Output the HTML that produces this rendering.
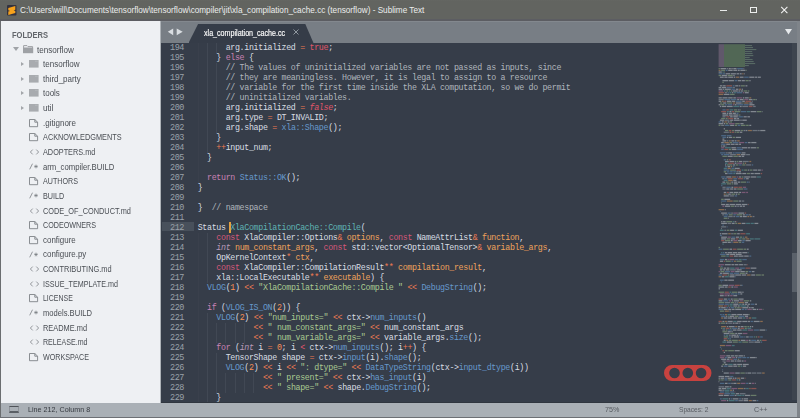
<!DOCTYPE html>
<html><head><meta charset="utf-8">
<style>
*{margin:0;padding:0;box-sizing:border-box}
html,body{width:800px;height:418px;overflow:hidden;background:#6b6e70}
body{position:relative;font-family:"Liberation Sans",sans-serif}
#title{position:absolute;left:0;top:0;width:800px;height:20.5px;background:linear-gradient(#656763 0,#626460 1px,#626460 18.5px,#5c5d62 19.5px);color:#eceeed;font-size:8.2px}
#title .t{position:absolute;left:20px;top:5.5px;white-space:pre}
#logo{position:absolute;left:6px;top:5px;width:10px;height:10px;background:#3b3a36;border-radius:1px}
#logo span{position:absolute;left:1.5px;top:1px;width:7px;height:8px;background:#f29a1f;clip-path:polygon(100% 0,100% 30%,35% 50%,100% 62%,100% 100%,0 100%,0 70%,62% 50%,0 38%,0 0)}
.wb{position:absolute;border-color:#e9ebea}
#side{position:absolute;left:1px;top:20.5px;width:159px;height:382px;background:#eef0f3;color:#4a4e54;overflow:hidden}
#side .h{position:absolute;left:10.6px;top:9px;font-weight:bold;font-size:9px;color:#62666b;transform:scaleX(0.84);transform-origin:0 0}
.row{position:absolute;left:0;height:14px;font-size:9.1px;white-space:pre;line-height:14px}
.row .tx{position:absolute;top:0;transform-origin:0 50%}
.tri{position:absolute;width:0;height:0;border-style:solid}
.fold{position:absolute;width:9.5px;height:7.5px;background:#a7aaae;border-radius:0.5px}
.file{position:absolute;left:28.5px;width:9px;height:8px;border:1px solid #6b6f74;border-radius:0.5px}
.file:after{content:"";position:absolute;right:-1px;top:-1px;width:3px;height:3px;background:#eef0f3;border-left:1px solid #6b6f74;border-bottom:1px solid #6b6f74}
.ic{position:absolute;left:28.5px;font-size:7.5px;color:#55595e;letter-spacing:0.6px}
#sidestrip{position:absolute;left:160px;top:20.5px;width:1.2px;height:382px;background:#aeb3b8}
#tabbar{position:absolute;left:161.2px;top:20.5px;width:637px;height:22.5px;background:#787e85;border-top:1.5px solid #83888e}
#tab{position:absolute;left:188.5px;top:24px;width:125px;height:19px;background:#353c48;clip-path:polygon(9.6px 0,116.8px 0,100% 100%,0 100%)}
#tab .tx{position:absolute;left:15.4px;top:3.6px;font-size:8.4px;color:#ffffff;white-space:pre;transform:scaleX(0.85);transform-origin:0 0;-webkit-text-stroke:0.15px #fff}
#tab .x{position:absolute;left:104px;top:5px;width:6px;height:6px}
#editor{position:absolute;left:161.2px;top:43px;width:636.8px;height:359.5px;background:#363d49;overflow:hidden;border-bottom:1.5px solid #30363f}
#status{position:absolute;left:1px;top:402.5px;width:797px;height:14.2px;background:#aab0b6;color:#363a40;font-size:7.8px}
#status .tx{position:absolute;top:2.6px;white-space:pre;transform:scaleX(0.92);transform-origin:0 0}
#code{position:absolute;left:35.7px;top:-0.3px;font-family:"Liberation Mono",monospace;font-size:8.3px;letter-spacing:-0.32px;line-height:10px;white-space:pre;color:#d9dee4}
#gutter{position:absolute;left:0;top:-0.4px;width:22px;font-family:"Liberation Mono",monospace;font-size:8.5px;letter-spacing:-0.44px;line-height:10px;white-space:pre;color:#9aa1a9;text-align:right}
#curline{position:absolute;left:0;top:178.5px;width:32.5px;height:9.5px;background:#48505b}
#guides b{position:absolute;width:1px;background:#414854}
#code i{font-style:normal}
i.cm{color:#b0b6bd}
i.kw{color:#c982b5}
i.cn{color:#d5587a}
i.in{color:#b99ab9;font-style:italic!important}
i.tr{color:#e0566a}
i.fa{color:#e0566a;font-style:italic!important}
i.op{color:#ee7b52}
i.lt{color:#e2566e}
i.bl{color:#6699cc}
i.cy{color:#5fb3b3}
i.pa{color:#f0a35c}
i.nu{color:#f99157}
i.st{color:#a9c991}
#cursor{position:absolute;left:67px;top:179.3px;width:1.9px;height:10.8px;background:#e3a040}
#mini{position:absolute;left:0;top:0;width:636px;height:359px}
#scroll{position:absolute;left:630px;top:0;width:5.2px;height:357px;background:#3e454f}
#thumb{position:absolute;left:630px;top:210px;width:5.2px;height:39px;background:#5a616a}
#frameR{position:absolute;left:797.2px;top:20.5px;width:2.8px;height:397px;background:#7f848a}
#frameB{position:absolute;left:0;top:416.7px;width:800px;height:1.3px;background:#6d7075}
</style></head><body>
<div id="title"><svg style="position:absolute;left:6.5px;top:4.6px" width="10" height="11" viewBox="0 0 10 11"><rect x="0" y="0" width="9.5" height="10.4" rx="1" fill="#33323f"/><path d="M1.3 2.9 L8.3 1.1 V4.7 L6.6 5.3 L8.3 5.9 V8.1 L1.3 9.9 V6.5 L3.1 5.9 L1.3 5.2Z" fill="#f7a21c"/></svg><div class="t">C:\Users\will\Documents\tensorflow\tensorflow\compiler\jit\xla_compilation_cache.cc (tensorflow) - Sublime Text</div>
<div style="position:absolute;left:720px;top:10px;width:7px;height:1px;background:#e9ebea"></div>
<div style="position:absolute;left:750px;top:6.8px;width:7.2px;height:6.4px;border:1px solid #eceeed"></div>
<svg style="position:absolute;left:780px;top:6px" width="9" height="8" viewBox="0 0 9 8"><path d="M1.2 0.9 L7.4 7.1 M7.4 0.9 L1.2 7.1" stroke="#f2f3f2" stroke-width="1.05"/></svg>
</div>
<div id="side">
<div class="h">FOLDERS</div>
<div class="tri" style="left:11.8px;top:26.90px;border-width:4px 3.2px 0 3.2px;border-color:#a0a3a7 transparent transparent transparent"></div><svg style="position:absolute;left:21.5px;top:24.90px" width="11" height="9" viewBox="0 0 11 9"><path d="M0.6 0.6 H4 L5 1.6 H9.6 V3 H0.6Z" fill="none" stroke="#9ea1a5" stroke-width="1"/><path d="M0 3 H10.2 V8.2 H0Z" fill="#9ea1a5"/></svg><div class="row" style="top:22.10px"><span class="tx" style="left:35.8px;transform:scaleX(0.890)">tensorflow</span></div><div class="tri" style="left:20.3px;top:41.43px;border-width:2.3px 0 2.3px 3.2px;border-color:transparent transparent transparent #a3a6aa"></div><svg style="position:absolute;left:27.9px;top:39.73px" width="10" height="8" viewBox="0 0 10 8"><path d="M0 0 H9.6 V7.6 H0Z" fill="#a8abaf"/><path d="M6 0.8 H8.8 V1.6 H6Z" fill="#b9bcbf"/></svg><div class="row" style="top:36.73px"><span class="tx" style="left:42.4px;transform:scaleX(0.883)">tensorflow</span></div><div class="tri" style="left:20.3px;top:56.06px;border-width:2.3px 0 2.3px 3.2px;border-color:transparent transparent transparent #a3a6aa"></div><svg style="position:absolute;left:27.9px;top:54.36px" width="10" height="8" viewBox="0 0 10 8"><path d="M0 0 H9.6 V7.6 H0Z" fill="#a8abaf"/><path d="M6 0.8 H8.8 V1.6 H6Z" fill="#b9bcbf"/></svg><div class="row" style="top:51.36px"><span class="tx" style="left:42.4px;transform:scaleX(0.880)">third_party</span></div><div class="tri" style="left:20.3px;top:70.69px;border-width:2.3px 0 2.3px 3.2px;border-color:transparent transparent transparent #a3a6aa"></div><svg style="position:absolute;left:27.9px;top:68.99px" width="10" height="8" viewBox="0 0 10 8"><path d="M0 0 H9.6 V7.6 H0Z" fill="#a8abaf"/><path d="M6 0.8 H8.8 V1.6 H6Z" fill="#b9bcbf"/></svg><div class="row" style="top:65.99px"><span class="tx" style="left:42.4px;transform:scaleX(0.878)">tools</span></div><div class="tri" style="left:20.3px;top:85.32px;border-width:2.3px 0 2.3px 3.2px;border-color:transparent transparent transparent #a3a6aa"></div><svg style="position:absolute;left:27.9px;top:83.62px" width="10" height="8" viewBox="0 0 10 8"><path d="M0 0 H9.6 V7.6 H0Z" fill="#a8abaf"/><path d="M6 0.8 H8.8 V1.6 H6Z" fill="#b9bcbf"/></svg><div class="row" style="top:80.62px"><span class="tx" style="left:42.4px;transform:scaleX(0.890)">util</span></div><svg style="position:absolute;left:27.9px;top:98.15px" width="10" height="9" viewBox="0 0 10 9"><path d="M0.5 0.5 H5.8 L8.6 3.2 V7.7 H0.5Z M5.8 0.5 V3.2 H8.6" fill="none" stroke="#7e8287" stroke-width="0.9"/></svg><div class="row" style="top:95.25px"><span class="tx" style="left:42.4px;transform:scaleX(0.882)">.gitignore</span></div><svg style="position:absolute;left:27.9px;top:112.78px" width="10" height="9" viewBox="0 0 10 9"><path d="M0.5 0.5 H5.8 L8.6 3.2 V7.7 H0.5Z M5.8 0.5 V3.2 H8.6" fill="none" stroke="#7e8287" stroke-width="0.9"/></svg><div class="row" style="top:109.88px"><span class="tx" style="left:42.4px;transform:scaleX(0.806)">ACKNOWLEDGMENTS</span></div><svg style="position:absolute;left:28.8px;top:128.51px" width="9" height="6" viewBox="0 0 9 6"><path d="M2.7 0.6 L0.4 3 L2.7 5.4 M6.3 0.6 L8.6 3 L6.3 5.4" fill="none" stroke="#74787d" stroke-width="0.75"/></svg><div class="row" style="top:124.51px"><span class="tx" style="left:42.4px;transform:scaleX(0.802)">ADOPTERS.md</span></div><svg style="position:absolute;left:28.1px;top:142.64px" width="10" height="7" viewBox="0 0 10 7"><path d="M0.7 6.3 L3.5 0.7" fill="none" stroke="#74787d" stroke-width="0.75"/><path d="M7 1.6 V5.4 M5.2 3.5 H8.8 M5.8 2.3 L8.2 4.7 M8.2 2.3 L5.8 4.7" fill="none" stroke="#74787d" stroke-width="0.65"/></svg><div class="row" style="top:139.14px"><span class="tx" style="left:42.4px;transform:scaleX(0.850)">arm_compiler.BUILD</span></div><svg style="position:absolute;left:27.9px;top:156.67px" width="10" height="9" viewBox="0 0 10 9"><path d="M0.5 0.5 H5.8 L8.6 3.2 V7.7 H0.5Z M5.8 0.5 V3.2 H8.6" fill="none" stroke="#7e8287" stroke-width="0.9"/></svg><div class="row" style="top:153.77px"><span class="tx" style="left:42.4px;transform:scaleX(0.786)">AUTHORS</span></div><svg style="position:absolute;left:28.1px;top:171.90px" width="10" height="7" viewBox="0 0 10 7"><path d="M0.7 6.3 L3.5 0.7" fill="none" stroke="#74787d" stroke-width="0.75"/><path d="M7 1.6 V5.4 M5.2 3.5 H8.8 M5.8 2.3 L8.2 4.7 M8.2 2.3 L5.8 4.7" fill="none" stroke="#74787d" stroke-width="0.65"/></svg><div class="row" style="top:168.40px"><span class="tx" style="left:42.4px;transform:scaleX(0.794)">BUILD</span></div><svg style="position:absolute;left:28.8px;top:187.03px" width="9" height="6" viewBox="0 0 9 6"><path d="M2.7 0.6 L0.4 3 L2.7 5.4 M6.3 0.6 L8.6 3 L6.3 5.4" fill="none" stroke="#74787d" stroke-width="0.75"/></svg><div class="row" style="top:183.03px"><span class="tx" style="left:42.4px;transform:scaleX(0.809)">CODE_OF_CONDUCT.md</span></div><svg style="position:absolute;left:27.9px;top:200.56px" width="10" height="9" viewBox="0 0 10 9"><path d="M0.5 0.5 H5.8 L8.6 3.2 V7.7 H0.5Z M5.8 0.5 V3.2 H8.6" fill="none" stroke="#7e8287" stroke-width="0.9"/></svg><div class="row" style="top:197.66px"><span class="tx" style="left:42.4px;transform:scaleX(0.789)">CODEOWNERS</span></div><svg style="position:absolute;left:27.9px;top:215.19px" width="10" height="9" viewBox="0 0 10 9"><path d="M0.5 0.5 H5.8 L8.6 3.2 V7.7 H0.5Z M5.8 0.5 V3.2 H8.6" fill="none" stroke="#7e8287" stroke-width="0.9"/></svg><div class="row" style="top:212.29px"><span class="tx" style="left:42.4px;transform:scaleX(0.874)">configure</span></div><svg style="position:absolute;left:28.1px;top:230.42px" width="10" height="7" viewBox="0 0 10 7"><path d="M0.7 6.3 L3.5 0.7" fill="none" stroke="#74787d" stroke-width="0.75"/><path d="M7 1.6 V5.4 M5.2 3.5 H8.8 M5.8 2.3 L8.2 4.7 M8.2 2.3 L5.8 4.7" fill="none" stroke="#74787d" stroke-width="0.65"/></svg><div class="row" style="top:226.92px"><span class="tx" style="left:42.4px;transform:scaleX(0.874)">configure.py</span></div><svg style="position:absolute;left:28.8px;top:245.55px" width="9" height="6" viewBox="0 0 9 6"><path d="M2.7 0.6 L0.4 3 L2.7 5.4 M6.3 0.6 L8.6 3 L6.3 5.4" fill="none" stroke="#74787d" stroke-width="0.75"/></svg><div class="row" style="top:241.55px"><span class="tx" style="left:42.4px;transform:scaleX(0.813)">CONTRIBUTING.md</span></div><svg style="position:absolute;left:28.8px;top:260.18px" width="9" height="6" viewBox="0 0 9 6"><path d="M2.7 0.6 L0.4 3 L2.7 5.4 M6.3 0.6 L8.6 3 L6.3 5.4" fill="none" stroke="#74787d" stroke-width="0.75"/></svg><div class="row" style="top:256.18px"><span class="tx" style="left:42.4px;transform:scaleX(0.790)">ISSUE_TEMPLATE.md</span></div><svg style="position:absolute;left:27.9px;top:273.71px" width="10" height="9" viewBox="0 0 10 9"><path d="M0.5 0.5 H5.8 L8.6 3.2 V7.7 H0.5Z M5.8 0.5 V3.2 H8.6" fill="none" stroke="#7e8287" stroke-width="0.9"/></svg><div class="row" style="top:270.81px"><span class="tx" style="left:42.4px;transform:scaleX(0.765)">LICENSE</span></div><svg style="position:absolute;left:28.1px;top:288.94px" width="10" height="7" viewBox="0 0 10 7"><path d="M0.7 6.3 L3.5 0.7" fill="none" stroke="#74787d" stroke-width="0.75"/><path d="M7 1.6 V5.4 M5.2 3.5 H8.8 M5.8 2.3 L8.2 4.7 M8.2 2.3 L5.8 4.7" fill="none" stroke="#74787d" stroke-width="0.65"/></svg><div class="row" style="top:285.44px"><span class="tx" style="left:42.4px;transform:scaleX(0.836)">models.BUILD</span></div><svg style="position:absolute;left:28.8px;top:304.07px" width="9" height="6" viewBox="0 0 9 6"><path d="M2.7 0.6 L0.4 3 L2.7 5.4 M6.3 0.6 L8.6 3 L6.3 5.4" fill="none" stroke="#74787d" stroke-width="0.75"/></svg><div class="row" style="top:300.07px"><span class="tx" style="left:42.4px;transform:scaleX(0.814)">README.md</span></div><svg style="position:absolute;left:28.8px;top:318.70px" width="9" height="6" viewBox="0 0 9 6"><path d="M2.7 0.6 L0.4 3 L2.7 5.4 M6.3 0.6 L8.6 3 L6.3 5.4" fill="none" stroke="#74787d" stroke-width="0.75"/></svg><div class="row" style="top:314.70px"><span class="tx" style="left:42.4px;transform:scaleX(0.779)">RELEASE.md</span></div><svg style="position:absolute;left:27.9px;top:332.23px" width="10" height="9" viewBox="0 0 10 9"><path d="M0.5 0.5 H5.8 L8.6 3.2 V7.7 H0.5Z M5.8 0.5 V3.2 H8.6" fill="none" stroke="#7e8287" stroke-width="0.9"/></svg><div class="row" style="top:329.33px"><span class="tx" style="left:42.4px;transform:scaleX(0.787)">WORKSPACE</span></div>
</div>
<div id="sidestrip"></div>
<div id="tabbar"></div>
<svg style="position:absolute;left:160px;top:20px" width="30" height="20" viewBox="0 0 30 20"><path d="M7.8 11.8 L13.2 8.4 L13.2 15.2Z M22.7 11.8 L16.7 8.4 L16.7 15.2Z" fill="#d9dde1"/></svg>
<div id="tab"><div class="tx">xla_compilation_cache.cc</div>
<svg class="x" viewBox="0 0 6 6" style="width:6px;height:6px"><path d="M0.5 0.5 L5.5 5.5 M5.5 0.5 L0.5 5.5" stroke="#9aa1a9" stroke-width="0.9"/></svg></div>
<svg style="position:absolute;left:784.5px;top:29px" width="7" height="6" viewBox="0 0 7 6"><path d="M0 0 L7 0 L3.5 5.5Z" fill="#e6e9ec"/></svg>
<div id="editor"><div style="position:absolute;left:0.8px;top:0;width:636px;height:358px">
<div id="curline"></div>
<div id="gutter">194
195
196
197
198
199
200
201
202
203
204
205
206
207
208
209
210
211
212
213
214
215
216
217
218
219
220
221
222
223
224
225
226
227
228
229</div>
<div id="guides"><b style="left:35.60px;top:0px;height:140px;opacity:.35"></b><b style="left:35.60px;top:190px;height:170px;opacity:.35"></b><b style="left:44.90px;top:0px;height:110px"></b><b style="left:44.90px;top:190px;height:50px"></b><b style="left:44.90px;top:270px;height:90px"></b><b style="left:54.20px;top:0px;height:10px"></b><b style="left:54.20px;top:20px;height:70px"></b><b style="left:54.20px;top:280px;height:20px"></b><b style="left:54.20px;top:310px;height:40px"></b><b style="left:63.50px;top:280px;height:20px"></b><b style="left:63.50px;top:330px;height:20px"></b><b style="left:72.80px;top:280px;height:20px"></b><b style="left:72.80px;top:330px;height:20px"></b><b style="left:82.10px;top:280px;height:20px"></b><b style="left:82.10px;top:330px;height:20px"></b><b style="left:91.40px;top:330px;height:20px"></b></div>
<div id="code">      arg.initialized <i class="op">=</i> <i class="tr">true</i>;
    } <i class="kw">else</i> {
      <i class="cm">// The values of uninitialized variables are not passed as inputs, since</i>
      <i class="cm">// they are meaningless. However, it is legal to assign to a resource</i>
      <i class="cm">// variable for the first time inside the XLA computation, so we do permit</i>
      <i class="cm">// uninitialized variables.</i>
      arg.initialized <i class="op">=</i> <i class="fa">false</i>;
      arg.type <i class="op">=</i> DT_INVALID;
      arg.shape <i class="op">=</i> <i class="bl">xla::Shape</i>();
    }
    <i class="op">++</i>input_num;
  }

  <i class="kw">return</i> <i class="bl">Status::OK</i>();
}

}  <i class="cm">// namespace</i>

Status <i class="cy">XlaCompilationCache::Compile</i>(
    <i class="cn">const</i> XlaCompiler::Options<i class="op">&amp;</i> <i class="pa">options</i>, <i class="cn">const</i> NameAttrList<i class="op">&amp;</i> <i class="pa">function</i>,
    <i class="in">int</i> <i class="pa">num_constant_args</i>, <i class="cn">const</i> std::vector&lt;OptionalTensor&gt;<i class="op">&amp;</i> <i class="pa">variable_args</i>,
    OpKernelContext<i class="op">*</i> <i class="pa">ctx</i>,
    <i class="cn">const</i> XlaCompiler::CompilationResult<i class="op">**</i> <i class="pa">compilation_result</i>,
    xla::LocalExecutable<i class="op">**</i> <i class="pa">executable</i>) {
  <i class="bl">VLOG</i>(<i class="nu">1</i>) <i class="op">&lt;&lt;</i> <i class="st">"XlaCompilationCache::Compile "</i> <i class="op">&lt;&lt;</i> <i class="bl">DebugString</i>();

  <i class="kw">if</i> (<i class="bl">VLOG_IS_ON</i>(<i class="nu">2</i>)) {
    <i class="bl">VLOG</i>(<i class="nu">2</i>) <i class="op">&lt;&lt;</i> <i class="st">"num_inputs="</i> <i class="op">&lt;&lt;</i> ctx-&gt;<i class="bl">num_inputs</i>()
            <i class="op">&lt;&lt;</i> <i class="st">" num_constant_args="</i> <i class="op">&lt;&lt;</i> num_constant_args
            <i class="op">&lt;&lt;</i> <i class="st">" num_variable_args="</i> <i class="op">&lt;&lt;</i> variable_args.<i class="bl">size</i>();
    <i class="kw">for</i> (<i class="in">int</i> i <i class="op">=</i> <i class="nu">0</i>; i <i class="lt">&lt;</i> ctx-&gt;<i class="bl">num_inputs</i>(); i<i class="op">++</i>) {
      TensorShape shape <i class="op">=</i> ctx-&gt;<i class="bl">input</i>(i).<i class="bl">shape</i>();
      <i class="bl">VLOG</i>(<i class="nu">2</i>) <i class="op">&lt;&lt;</i> i <i class="op">&lt;&lt;</i> <i class="st">": dtype="</i> <i class="op">&lt;&lt;</i> <i class="bl">DataTypeString</i>(ctx-&gt;<i class="bl">input_dtype</i>(i))
              <i class="op">&lt;&lt;</i> <i class="st">" present="</i> <i class="op">&lt;&lt;</i> ctx-&gt;<i class="bl">has_input</i>(i)
              <i class="op">&lt;&lt;</i> <i class="st">" shape="</i> <i class="op">&lt;&lt;</i> shape.<i class="bl">DebugString</i>();
    }</div>
<div id="cursor"></div>
<div id="mini"><svg style="position:absolute;left:0;top:0" width="636" height="359"><defs><filter id="mb" x="-5%" y="-5%" width="110%" height="110%"><feGaussianBlur stdDeviation="0.6 0.45"/></filter></defs><g filter="url(#mb)"><rect x="556.60" y="1.20" width="5.40" height="22.80" fill="#6a5f73" fill-opacity="0.8"/><rect x="562.00" y="1.20" width="21.00" height="22.80" fill="#587259" fill-opacity="0.8"/><rect x="583.00" y="2.00" width="7.07" height="1.10" fill="rgb(150,190,150)" fill-opacity="0.35"/><rect x="583.00" y="4.00" width="8.04" height="1.10" fill="rgb(150,190,150)" fill-opacity="0.35"/><rect x="583.00" y="6.00" width="11.32" height="1.10" fill="rgb(150,190,150)" fill-opacity="0.35"/><rect x="583.00" y="8.00" width="7.19" height="1.10" fill="rgb(150,190,150)" fill-opacity="0.35"/><rect x="583.00" y="10.00" width="7.57" height="1.10" fill="rgb(150,190,150)" fill-opacity="0.35"/><rect x="583.00" y="12.00" width="8.29" height="1.10" fill="rgb(150,190,150)" fill-opacity="0.35"/><rect x="583.00" y="14.00" width="4.66" height="1.10" fill="rgb(150,190,150)" fill-opacity="0.35"/><rect x="583.00" y="16.00" width="7.61" height="1.10" fill="rgb(150,190,150)" fill-opacity="0.35"/><rect x="583.00" y="18.00" width="8.67" height="1.10" fill="rgb(150,190,150)" fill-opacity="0.35"/><rect x="583.00" y="20.00" width="10.14" height="1.10" fill="rgb(150,190,150)" fill-opacity="0.35"/><rect x="583.00" y="22.00" width="3.85" height="1.10" fill="rgb(150,190,150)" fill-opacity="0.35"/><rect x="556.60" y="25.00" width="1.28" height="1.25" fill="rgb(169,201,145)" fill-opacity="0.45"/><rect x="558.52" y="25.00" width="5.76" height="1.25" fill="rgb(205,210,216)" fill-opacity="0.5"/><rect x="564.92" y="25.00" width="1.28" height="1.25" fill="rgb(160,168,178)" fill-opacity="0.5"/><rect x="566.84" y="25.00" width="1.92" height="1.25" fill="rgb(205,210,216)" fill-opacity="0.5"/><rect x="569.40" y="25.00" width="1.28" height="1.25" fill="rgb(205,210,216)" fill-opacity="0.5"/><rect x="571.32" y="25.00" width="3.20" height="1.25" fill="rgb(205,210,216)" fill-opacity="0.5"/><rect x="575.16" y="25.00" width="5.76" height="1.25" fill="rgb(102,153,204)" fill-opacity="0.45"/><rect x="581.56" y="25.00" width="0.64" height="1.25" fill="rgb(205,210,216)" fill-opacity="0.5"/><rect x="556.60" y="26.72" width="1.92" height="1.25" fill="rgb(240,163,92)" fill-opacity="0.45"/><rect x="559.16" y="26.72" width="3.84" height="1.25" fill="rgb(169,201,145)" fill-opacity="0.45"/><rect x="563.64" y="26.72" width="1.92" height="1.25" fill="rgb(102,153,204)" fill-opacity="0.45"/><rect x="566.20" y="26.72" width="4.48" height="1.25" fill="rgb(205,210,216)" fill-opacity="0.5"/><rect x="571.32" y="26.72" width="3.84" height="1.25" fill="rgb(205,210,216)" fill-opacity="0.5"/><rect x="575.80" y="26.72" width="1.92" height="1.25" fill="rgb(205,210,216)" fill-opacity="0.5"/><rect x="578.36" y="26.72" width="5.12" height="1.25" fill="rgb(205,210,216)" fill-opacity="0.5"/><rect x="584.12" y="26.72" width="0.64" height="1.25" fill="rgb(169,201,145)" fill-opacity="0.45"/><rect x="556.60" y="28.44" width="3.20" height="1.25" fill="rgb(205,210,216)" fill-opacity="0.5"/><rect x="560.44" y="28.44" width="1.28" height="1.25" fill="rgb(95,179,179)" fill-opacity="0.45"/><rect x="562.36" y="28.44" width="0.64" height="1.25" fill="rgb(169,201,145)" fill-opacity="0.45"/><rect x="556.60" y="30.16" width="3.84" height="1.25" fill="rgb(102,153,204)" fill-opacity="0.45"/><rect x="561.08" y="30.16" width="1.92" height="1.25" fill="rgb(102,153,204)" fill-opacity="0.45"/><rect x="563.64" y="30.16" width="4.48" height="1.25" fill="rgb(205,210,216)" fill-opacity="0.5"/><rect x="568.76" y="30.16" width="5.12" height="1.25" fill="rgb(205,210,216)" fill-opacity="0.5"/><rect x="574.52" y="30.16" width="2.56" height="1.25" fill="rgb(205,210,216)" fill-opacity="0.5"/><rect x="577.72" y="30.16" width="1.92" height="1.25" fill="rgb(205,210,216)" fill-opacity="0.5"/><rect x="580.28" y="30.16" width="1.28" height="1.25" fill="rgb(240,163,92)" fill-opacity="0.45"/><rect x="582.20" y="30.16" width="0.64" height="1.25" fill="rgb(205,210,216)" fill-opacity="0.5"/><rect x="556.60" y="31.88" width="2.56" height="1.25" fill="rgb(169,201,145)" fill-opacity="0.45"/><rect x="559.80" y="31.88" width="5.12" height="1.25" fill="rgb(205,210,216)" fill-opacity="0.5"/><rect x="565.56" y="31.88" width="5.12" height="1.25" fill="rgb(169,201,145)" fill-opacity="0.45"/><rect x="571.32" y="31.88" width="1.28" height="1.25" fill="rgb(205,210,216)" fill-opacity="0.5"/><rect x="557.88" y="33.60" width="3.84" height="1.25" fill="rgb(205,210,216)" fill-opacity="0.5"/><rect x="562.36" y="33.60" width="3.20" height="1.25" fill="rgb(205,210,216)" fill-opacity="0.5"/><rect x="566.20" y="33.60" width="5.12" height="1.25" fill="rgb(205,210,216)" fill-opacity="0.5"/><rect x="571.96" y="33.60" width="1.28" height="1.25" fill="rgb(205,210,216)" fill-opacity="0.5"/><rect x="573.88" y="33.60" width="3.20" height="1.25" fill="rgb(240,163,92)" fill-opacity="0.45"/><rect x="577.72" y="33.60" width="3.84" height="1.25" fill="rgb(205,210,216)" fill-opacity="0.5"/><rect x="582.20" y="33.60" width="4.48" height="1.25" fill="rgb(102,153,204)" fill-opacity="0.45"/><rect x="587.32" y="33.60" width="5.12" height="1.25" fill="rgb(205,210,216)" fill-opacity="0.5"/><rect x="593.08" y="33.60" width="1.92" height="1.25" fill="rgb(205,210,216)" fill-opacity="0.5"/><rect x="595.64" y="33.60" width="3.20" height="1.25" fill="rgb(205,210,216)" fill-opacity="0.5"/><rect x="560.44" y="37.04" width="5.76" height="1.25" fill="rgb(205,210,216)" fill-opacity="0.5"/><rect x="566.84" y="37.04" width="5.12" height="1.25" fill="rgb(205,210,216)" fill-opacity="0.5"/><rect x="572.60" y="37.04" width="2.56" height="1.25" fill="rgb(102,153,204)" fill-opacity="0.45"/><rect x="575.80" y="37.04" width="3.20" height="1.25" fill="rgb(205,210,216)" fill-opacity="0.5"/><rect x="579.64" y="37.04" width="3.20" height="1.25" fill="rgb(205,210,216)" fill-opacity="0.5"/><rect x="583.48" y="37.04" width="3.20" height="1.25" fill="rgb(169,201,145)" fill-opacity="0.45"/><rect x="587.32" y="37.04" width="1.28" height="1.25" fill="rgb(205,210,216)" fill-opacity="0.5"/><rect x="560.44" y="38.76" width="1.28" height="1.25" fill="rgb(169,201,145)" fill-opacity="0.45"/><rect x="557.88" y="42.20" width="2.56" height="1.25" fill="rgb(205,210,216)" fill-opacity="0.5"/><rect x="561.08" y="42.20" width="2.56" height="1.25" fill="rgb(205,210,216)" fill-opacity="0.5"/><rect x="564.28" y="42.20" width="5.76" height="1.25" fill="rgb(236,110,90)" fill-opacity="0.45"/><rect x="570.68" y="42.20" width="1.92" height="1.25" fill="rgb(102,153,204)" fill-opacity="0.45"/><rect x="573.24" y="42.20" width="3.20" height="1.25" fill="rgb(205,210,216)" fill-opacity="0.5"/><rect x="577.08" y="42.20" width="1.28" height="1.25" fill="rgb(205,210,216)" fill-opacity="0.5"/><rect x="579.00" y="42.20" width="3.84" height="1.25" fill="rgb(169,201,145)" fill-opacity="0.45"/><rect x="583.48" y="42.20" width="1.92" height="1.25" fill="rgb(205,210,216)" fill-opacity="0.5"/><rect x="556.60" y="43.92" width="2.56" height="1.25" fill="rgb(205,210,216)" fill-opacity="0.5"/><rect x="559.80" y="43.92" width="4.48" height="1.25" fill="rgb(205,210,216)" fill-opacity="0.5"/><rect x="564.92" y="43.92" width="5.76" height="1.25" fill="rgb(102,153,204)" fill-opacity="0.45"/><rect x="571.32" y="43.92" width="1.28" height="1.25" fill="rgb(205,210,216)" fill-opacity="0.5"/><rect x="556.60" y="45.64" width="3.84" height="1.25" fill="rgb(205,210,216)" fill-opacity="0.5"/><rect x="561.08" y="45.64" width="1.28" height="1.25" fill="rgb(205,210,216)" fill-opacity="0.5"/><rect x="563.00" y="45.64" width="5.76" height="1.25" fill="rgb(205,210,216)" fill-opacity="0.5"/><rect x="569.40" y="45.64" width="3.84" height="1.25" fill="rgb(102,153,204)" fill-opacity="0.45"/><rect x="573.88" y="45.64" width="2.56" height="1.25" fill="rgb(205,210,216)" fill-opacity="0.5"/><rect x="577.08" y="45.64" width="1.92" height="1.25" fill="rgb(240,163,92)" fill-opacity="0.45"/><rect x="579.64" y="45.64" width="1.28" height="1.25" fill="rgb(205,210,216)" fill-opacity="0.5"/><rect x="556.60" y="47.36" width="4.48" height="1.25" fill="rgb(201,123,171)" fill-opacity="0.45"/><rect x="561.72" y="47.36" width="1.92" height="1.25" fill="rgb(95,179,179)" fill-opacity="0.45"/><rect x="564.28" y="47.36" width="1.92" height="1.25" fill="rgb(169,201,145)" fill-opacity="0.45"/><rect x="566.84" y="47.36" width="1.28" height="1.25" fill="rgb(95,179,179)" fill-opacity="0.45"/><rect x="568.76" y="47.36" width="1.28" height="1.25" fill="rgb(169,201,145)" fill-opacity="0.45"/><rect x="570.68" y="47.36" width="5.12" height="1.25" fill="rgb(205,210,216)" fill-opacity="0.5"/><rect x="576.44" y="47.36" width="1.92" height="1.25" fill="rgb(205,210,216)" fill-opacity="0.5"/><rect x="579.00" y="47.36" width="1.92" height="1.25" fill="rgb(205,210,216)" fill-opacity="0.5"/><rect x="581.56" y="47.36" width="3.84" height="1.25" fill="rgb(169,201,145)" fill-opacity="0.45"/><rect x="586.04" y="47.36" width="1.28" height="1.25" fill="rgb(169,201,145)" fill-opacity="0.45"/><rect x="556.60" y="49.08" width="5.76" height="1.25" fill="rgb(236,110,90)" fill-opacity="0.45"/><rect x="563.00" y="49.08" width="1.92" height="1.25" fill="rgb(160,168,178)" fill-opacity="0.5"/><rect x="565.56" y="49.08" width="1.28" height="1.25" fill="rgb(102,153,204)" fill-opacity="0.45"/><rect x="567.48" y="49.08" width="1.92" height="1.25" fill="rgb(95,179,179)" fill-opacity="0.45"/><rect x="570.04" y="49.08" width="1.28" height="1.25" fill="rgb(205,210,216)" fill-opacity="0.5"/><rect x="571.96" y="49.08" width="1.92" height="1.25" fill="rgb(95,179,179)" fill-opacity="0.45"/><rect x="574.52" y="49.08" width="5.76" height="1.25" fill="rgb(102,153,204)" fill-opacity="0.45"/><rect x="580.92" y="49.08" width="1.28" height="1.25" fill="rgb(201,123,171)" fill-opacity="0.45"/><rect x="582.84" y="49.08" width="3.84" height="1.25" fill="rgb(205,210,216)" fill-opacity="0.5"/><rect x="556.60" y="50.80" width="4.48" height="1.25" fill="rgb(240,163,92)" fill-opacity="0.45"/><rect x="561.72" y="50.80" width="5.76" height="1.25" fill="rgb(205,210,216)" fill-opacity="0.5"/><rect x="568.12" y="50.80" width="4.48" height="1.25" fill="rgb(169,201,145)" fill-opacity="0.45"/><rect x="556.60" y="54.24" width="3.20" height="1.25" fill="rgb(205,210,216)" fill-opacity="0.5"/><rect x="560.44" y="54.24" width="5.12" height="1.25" fill="rgb(205,210,216)" fill-opacity="0.5"/><rect x="566.20" y="54.24" width="4.48" height="1.25" fill="rgb(205,210,216)" fill-opacity="0.5"/><rect x="571.32" y="54.24" width="2.56" height="1.25" fill="rgb(205,210,216)" fill-opacity="0.5"/><rect x="574.52" y="54.24" width="5.76" height="1.25" fill="rgb(201,123,171)" fill-opacity="0.45"/><rect x="580.92" y="54.24" width="1.28" height="1.25" fill="rgb(205,210,216)" fill-opacity="0.5"/><rect x="582.84" y="54.24" width="3.84" height="1.25" fill="rgb(205,210,216)" fill-opacity="0.5"/><rect x="587.32" y="54.24" width="1.92" height="1.25" fill="rgb(240,163,92)" fill-opacity="0.45"/><rect x="556.60" y="55.96" width="5.12" height="1.25" fill="rgb(160,168,178)" fill-opacity="0.5"/><rect x="562.36" y="55.96" width="5.76" height="1.25" fill="rgb(102,153,204)" fill-opacity="0.45"/><rect x="568.76" y="55.96" width="5.76" height="1.25" fill="rgb(102,153,204)" fill-opacity="0.45"/><rect x="575.16" y="55.96" width="1.92" height="1.25" fill="rgb(205,210,216)" fill-opacity="0.5"/><rect x="577.72" y="55.96" width="3.84" height="1.25" fill="rgb(205,210,216)" fill-opacity="0.5"/><rect x="582.20" y="55.96" width="3.84" height="1.25" fill="rgb(201,123,171)" fill-opacity="0.45"/><rect x="586.68" y="55.96" width="3.84" height="1.25" fill="rgb(205,210,216)" fill-opacity="0.5"/><rect x="591.16" y="55.96" width="2.56" height="1.25" fill="rgb(169,201,145)" fill-opacity="0.45"/><rect x="594.36" y="55.96" width="0.64" height="1.25" fill="rgb(205,210,216)" fill-opacity="0.5"/><rect x="556.60" y="57.68" width="2.56" height="1.25" fill="rgb(205,210,216)" fill-opacity="0.5"/><rect x="559.80" y="57.68" width="1.92" height="1.25" fill="rgb(240,163,92)" fill-opacity="0.45"/><rect x="562.36" y="57.68" width="1.92" height="1.25" fill="rgb(236,110,90)" fill-opacity="0.45"/><rect x="564.92" y="57.68" width="4.48" height="1.25" fill="rgb(205,210,216)" fill-opacity="0.5"/><rect x="570.04" y="57.68" width="3.20" height="1.25" fill="rgb(205,210,216)" fill-opacity="0.5"/><rect x="573.88" y="57.68" width="5.76" height="1.25" fill="rgb(102,153,204)" fill-opacity="0.45"/><rect x="580.28" y="57.68" width="2.56" height="1.25" fill="rgb(205,210,216)" fill-opacity="0.5"/><rect x="583.48" y="57.68" width="5.76" height="1.25" fill="rgb(236,110,90)" fill-opacity="0.45"/><rect x="589.88" y="57.68" width="0.64" height="1.25" fill="rgb(205,210,216)" fill-opacity="0.5"/><rect x="557.88" y="59.40" width="2.56" height="1.25" fill="rgb(169,201,145)" fill-opacity="0.45"/><rect x="561.08" y="59.40" width="3.20" height="1.25" fill="rgb(205,210,216)" fill-opacity="0.5"/><rect x="564.92" y="59.40" width="5.12" height="1.25" fill="rgb(169,201,145)" fill-opacity="0.45"/><rect x="570.68" y="59.40" width="2.56" height="1.25" fill="rgb(240,163,92)" fill-opacity="0.45"/><rect x="573.88" y="59.40" width="5.76" height="1.25" fill="rgb(205,210,216)" fill-opacity="0.5"/><rect x="580.28" y="59.40" width="1.28" height="1.25" fill="rgb(169,201,145)" fill-opacity="0.45"/><rect x="582.20" y="59.40" width="4.48" height="1.25" fill="rgb(240,163,92)" fill-opacity="0.45"/><rect x="587.32" y="59.40" width="3.20" height="1.25" fill="rgb(205,210,216)" fill-opacity="0.5"/><rect x="556.60" y="61.12" width="1.92" height="1.25" fill="rgb(205,210,216)" fill-opacity="0.5"/><rect x="559.16" y="61.12" width="3.20" height="1.25" fill="rgb(169,201,145)" fill-opacity="0.45"/><rect x="563.00" y="61.12" width="1.92" height="1.25" fill="rgb(102,153,204)" fill-opacity="0.45"/><rect x="565.56" y="61.12" width="4.48" height="1.25" fill="rgb(102,153,204)" fill-opacity="0.45"/><rect x="570.68" y="61.12" width="1.28" height="1.25" fill="rgb(201,123,171)" fill-opacity="0.45"/><rect x="572.60" y="61.12" width="1.92" height="1.25" fill="rgb(205,210,216)" fill-opacity="0.5"/><rect x="575.16" y="61.12" width="5.76" height="1.25" fill="rgb(102,153,204)" fill-opacity="0.45"/><rect x="581.56" y="61.12" width="5.12" height="1.25" fill="rgb(102,153,204)" fill-opacity="0.45"/><rect x="587.32" y="61.12" width="5.12" height="1.25" fill="rgb(205,210,216)" fill-opacity="0.5"/><rect x="557.88" y="62.84" width="1.28" height="1.25" fill="rgb(205,210,216)" fill-opacity="0.5"/><rect x="559.80" y="62.84" width="4.48" height="1.25" fill="rgb(205,210,216)" fill-opacity="0.5"/><rect x="564.92" y="62.84" width="5.76" height="1.25" fill="rgb(205,210,216)" fill-opacity="0.5"/><rect x="571.32" y="62.84" width="5.76" height="1.25" fill="rgb(95,179,179)" fill-opacity="0.45"/><rect x="577.72" y="62.84" width="1.92" height="1.25" fill="rgb(205,210,216)" fill-opacity="0.5"/><rect x="580.28" y="62.84" width="5.76" height="1.25" fill="rgb(160,168,178)" fill-opacity="0.5"/><rect x="586.68" y="62.84" width="3.84" height="1.25" fill="rgb(236,110,90)" fill-opacity="0.45"/><rect x="591.16" y="62.84" width="2.56" height="1.25" fill="rgb(160,168,178)" fill-opacity="0.5"/><rect x="560.44" y="66.28" width="3.20" height="1.25" fill="rgb(102,153,204)" fill-opacity="0.45"/><rect x="564.28" y="66.28" width="2.56" height="1.25" fill="rgb(236,110,90)" fill-opacity="0.45"/><rect x="567.48" y="66.28" width="3.84" height="1.25" fill="rgb(95,179,179)" fill-opacity="0.45"/><rect x="571.96" y="66.28" width="3.20" height="1.25" fill="rgb(169,201,145)" fill-opacity="0.45"/><rect x="575.80" y="66.28" width="1.92" height="1.25" fill="rgb(160,168,178)" fill-opacity="0.5"/><rect x="578.36" y="66.28" width="0.64" height="1.25" fill="rgb(169,201,145)" fill-opacity="0.45"/><rect x="559.16" y="68.00" width="5.12" height="1.25" fill="rgb(236,110,90)" fill-opacity="0.45"/><rect x="564.92" y="68.00" width="1.92" height="1.25" fill="rgb(95,179,179)" fill-opacity="0.45"/><rect x="567.48" y="68.00" width="1.92" height="1.25" fill="rgb(205,210,216)" fill-opacity="0.5"/><rect x="570.04" y="68.00" width="1.92" height="1.25" fill="rgb(236,110,90)" fill-opacity="0.45"/><rect x="572.60" y="68.00" width="5.76" height="1.25" fill="rgb(169,201,145)" fill-opacity="0.45"/><rect x="579.00" y="68.00" width="5.12" height="1.25" fill="rgb(102,153,204)" fill-opacity="0.45"/><rect x="584.76" y="68.00" width="3.20" height="1.25" fill="rgb(95,179,179)" fill-opacity="0.45"/><rect x="588.60" y="68.00" width="5.76" height="1.25" fill="rgb(205,210,216)" fill-opacity="0.5"/><rect x="595.00" y="68.00" width="4.48" height="1.25" fill="rgb(169,201,145)" fill-opacity="0.45"/><rect x="600.12" y="68.00" width="0.64" height="1.25" fill="rgb(160,168,178)" fill-opacity="0.5"/><rect x="560.44" y="69.72" width="3.84" height="1.25" fill="rgb(205,210,216)" fill-opacity="0.5"/><rect x="564.92" y="69.72" width="1.28" height="1.25" fill="rgb(205,210,216)" fill-opacity="0.5"/><rect x="566.84" y="69.72" width="3.20" height="1.25" fill="rgb(205,210,216)" fill-opacity="0.5"/><rect x="570.68" y="69.72" width="3.20" height="1.25" fill="rgb(205,210,216)" fill-opacity="0.5"/><rect x="574.52" y="69.72" width="1.92" height="1.25" fill="rgb(102,153,204)" fill-opacity="0.45"/><rect x="560.44" y="71.44" width="5.76" height="1.25" fill="rgb(205,210,216)" fill-opacity="0.5"/><rect x="566.84" y="71.44" width="3.84" height="1.25" fill="rgb(205,210,216)" fill-opacity="0.5"/><rect x="571.32" y="71.44" width="5.12" height="1.25" fill="rgb(205,210,216)" fill-opacity="0.5"/><rect x="577.08" y="71.44" width="1.28" height="1.25" fill="rgb(169,201,145)" fill-opacity="0.45"/><rect x="560.44" y="73.16" width="3.20" height="1.25" fill="rgb(160,168,178)" fill-opacity="0.5"/><rect x="564.28" y="73.16" width="3.20" height="1.25" fill="rgb(236,110,90)" fill-opacity="0.45"/><rect x="568.12" y="73.16" width="2.56" height="1.25" fill="rgb(205,210,216)" fill-opacity="0.5"/><rect x="571.32" y="73.16" width="4.48" height="1.25" fill="rgb(205,210,216)" fill-opacity="0.5"/><rect x="576.44" y="73.16" width="4.48" height="1.25" fill="rgb(102,153,204)" fill-opacity="0.45"/><rect x="581.56" y="73.16" width="3.20" height="1.25" fill="rgb(205,210,216)" fill-opacity="0.5"/><rect x="585.40" y="73.16" width="2.56" height="1.25" fill="rgb(205,210,216)" fill-opacity="0.5"/><rect x="559.16" y="74.88" width="3.84" height="1.25" fill="rgb(169,201,145)" fill-opacity="0.45"/><rect x="563.64" y="74.88" width="1.92" height="1.25" fill="rgb(169,201,145)" fill-opacity="0.45"/><rect x="566.20" y="74.88" width="5.12" height="1.25" fill="rgb(236,110,90)" fill-opacity="0.45"/><rect x="571.96" y="74.88" width="2.56" height="1.25" fill="rgb(205,210,216)" fill-opacity="0.5"/><rect x="575.16" y="74.88" width="1.92" height="1.25" fill="rgb(205,210,216)" fill-opacity="0.5"/><rect x="557.88" y="76.60" width="4.48" height="1.25" fill="rgb(205,210,216)" fill-opacity="0.5"/><rect x="563.00" y="76.60" width="4.48" height="1.25" fill="rgb(160,168,178)" fill-opacity="0.5"/><rect x="568.12" y="76.60" width="3.20" height="1.25" fill="rgb(205,210,216)" fill-opacity="0.5"/><rect x="571.96" y="76.60" width="5.76" height="1.25" fill="rgb(205,210,216)" fill-opacity="0.5"/><rect x="578.36" y="76.60" width="1.28" height="1.25" fill="rgb(205,210,216)" fill-opacity="0.5"/><rect x="580.28" y="76.60" width="4.48" height="1.25" fill="rgb(205,210,216)" fill-opacity="0.5"/><rect x="556.60" y="78.32" width="2.56" height="1.25" fill="rgb(102,153,204)" fill-opacity="0.45"/><rect x="559.80" y="78.32" width="1.92" height="1.25" fill="rgb(205,210,216)" fill-opacity="0.5"/><rect x="562.36" y="78.32" width="2.56" height="1.25" fill="rgb(240,163,92)" fill-opacity="0.45"/><rect x="565.56" y="78.32" width="1.92" height="1.25" fill="rgb(205,210,216)" fill-opacity="0.5"/><rect x="568.12" y="78.32" width="1.92" height="1.25" fill="rgb(169,201,145)" fill-opacity="0.45"/><rect x="556.60" y="80.04" width="4.48" height="1.25" fill="rgb(205,210,216)" fill-opacity="0.5"/><rect x="561.72" y="80.04" width="1.28" height="1.25" fill="rgb(205,210,216)" fill-opacity="0.5"/><rect x="563.64" y="80.04" width="2.56" height="1.25" fill="rgb(169,201,145)" fill-opacity="0.45"/><rect x="566.84" y="80.04" width="5.76" height="1.25" fill="rgb(201,123,171)" fill-opacity="0.45"/><rect x="573.24" y="80.04" width="4.48" height="1.25" fill="rgb(169,201,145)" fill-opacity="0.45"/><rect x="578.36" y="80.04" width="3.20" height="1.25" fill="rgb(205,210,216)" fill-opacity="0.5"/><rect x="556.60" y="81.76" width="1.92" height="1.25" fill="rgb(169,201,145)" fill-opacity="0.45"/><rect x="559.16" y="81.76" width="3.20" height="1.25" fill="rgb(160,168,178)" fill-opacity="0.5"/><rect x="563.00" y="81.76" width="4.48" height="1.25" fill="rgb(102,153,204)" fill-opacity="0.45"/><rect x="568.12" y="81.76" width="3.84" height="1.25" fill="rgb(205,210,216)" fill-opacity="0.5"/><rect x="572.60" y="81.76" width="2.56" height="1.25" fill="rgb(169,201,145)" fill-opacity="0.45"/><rect x="575.80" y="81.76" width="2.56" height="1.25" fill="rgb(102,153,204)" fill-opacity="0.45"/><rect x="579.00" y="81.76" width="4.48" height="1.25" fill="rgb(169,201,145)" fill-opacity="0.45"/><rect x="584.12" y="81.76" width="2.56" height="1.25" fill="rgb(169,201,145)" fill-opacity="0.45"/><rect x="587.32" y="81.76" width="1.92" height="1.25" fill="rgb(205,210,216)" fill-opacity="0.5"/><rect x="561.72" y="85.20" width="1.28" height="1.25" fill="rgb(205,210,216)" fill-opacity="0.5"/><rect x="563.00" y="86.92" width="3.20" height="1.25" fill="rgb(169,201,145)" fill-opacity="0.45"/><rect x="566.84" y="86.92" width="2.56" height="1.25" fill="rgb(236,110,90)" fill-opacity="0.45"/><rect x="570.04" y="86.92" width="1.92" height="1.25" fill="rgb(169,201,145)" fill-opacity="0.45"/><rect x="572.60" y="86.92" width="5.76" height="1.25" fill="rgb(205,210,216)" fill-opacity="0.5"/><rect x="579.00" y="86.92" width="1.92" height="1.25" fill="rgb(169,201,145)" fill-opacity="0.45"/><rect x="581.56" y="86.92" width="1.28" height="1.25" fill="rgb(205,210,216)" fill-opacity="0.5"/><rect x="583.48" y="86.92" width="1.92" height="1.25" fill="rgb(205,210,216)" fill-opacity="0.5"/><rect x="586.04" y="86.92" width="3.84" height="1.25" fill="rgb(240,163,92)" fill-opacity="0.45"/><rect x="590.52" y="86.92" width="5.12" height="1.25" fill="rgb(160,168,178)" fill-opacity="0.5"/><rect x="596.28" y="86.92" width="1.28" height="1.25" fill="rgb(205,210,216)" fill-opacity="0.5"/><rect x="598.20" y="86.92" width="5.12" height="1.25" fill="rgb(205,210,216)" fill-opacity="0.5"/><rect x="561.72" y="88.64" width="5.12" height="1.25" fill="rgb(160,168,178)" fill-opacity="0.5"/><rect x="567.48" y="88.64" width="1.92" height="1.25" fill="rgb(240,163,92)" fill-opacity="0.45"/><rect x="570.04" y="88.64" width="1.92" height="1.25" fill="rgb(236,110,90)" fill-opacity="0.45"/><rect x="572.60" y="88.64" width="1.28" height="1.25" fill="rgb(169,201,145)" fill-opacity="0.45"/><rect x="574.52" y="88.64" width="2.56" height="1.25" fill="rgb(169,201,145)" fill-opacity="0.45"/><rect x="577.72" y="88.64" width="2.56" height="1.25" fill="rgb(205,210,216)" fill-opacity="0.5"/><rect x="559.16" y="92.08" width="5.12" height="1.25" fill="rgb(102,153,204)" fill-opacity="0.45"/><rect x="564.92" y="92.08" width="4.48" height="1.25" fill="rgb(102,153,204)" fill-opacity="0.45"/><rect x="560.44" y="93.80" width="3.84" height="1.25" fill="rgb(102,153,204)" fill-opacity="0.45"/><rect x="564.92" y="93.80" width="1.28" height="1.25" fill="rgb(205,210,216)" fill-opacity="0.5"/><rect x="566.84" y="93.80" width="3.20" height="1.25" fill="rgb(205,210,216)" fill-opacity="0.5"/><rect x="570.68" y="93.80" width="2.56" height="1.25" fill="rgb(169,201,145)" fill-opacity="0.45"/><rect x="573.88" y="93.80" width="5.12" height="1.25" fill="rgb(205,210,216)" fill-opacity="0.5"/><rect x="560.44" y="95.52" width="1.92" height="1.25" fill="rgb(205,210,216)" fill-opacity="0.5"/><rect x="560.44" y="97.24" width="3.84" height="1.25" fill="rgb(205,210,216)" fill-opacity="0.5"/><rect x="564.92" y="97.24" width="1.28" height="1.25" fill="rgb(160,168,178)" fill-opacity="0.5"/><rect x="566.84" y="97.24" width="1.92" height="1.25" fill="rgb(240,163,92)" fill-opacity="0.45"/><rect x="569.40" y="97.24" width="2.56" height="1.25" fill="rgb(205,210,216)" fill-opacity="0.5"/><rect x="572.60" y="97.24" width="1.92" height="1.25" fill="rgb(205,210,216)" fill-opacity="0.5"/><rect x="575.16" y="97.24" width="2.56" height="1.25" fill="rgb(240,163,92)" fill-opacity="0.45"/><rect x="559.16" y="98.96" width="2.56" height="1.25" fill="rgb(205,210,216)" fill-opacity="0.5"/><rect x="562.36" y="98.96" width="4.48" height="1.25" fill="rgb(240,163,92)" fill-opacity="0.45"/><rect x="567.48" y="98.96" width="2.56" height="1.25" fill="rgb(169,201,145)" fill-opacity="0.45"/><rect x="570.68" y="98.96" width="5.76" height="1.25" fill="rgb(102,153,204)" fill-opacity="0.45"/><rect x="577.08" y="98.96" width="5.12" height="1.25" fill="rgb(201,123,171)" fill-opacity="0.45"/><rect x="582.84" y="98.96" width="2.56" height="1.25" fill="rgb(102,153,204)" fill-opacity="0.45"/><rect x="586.04" y="98.96" width="2.56" height="1.25" fill="rgb(205,210,216)" fill-opacity="0.5"/><rect x="589.24" y="98.96" width="5.12" height="1.25" fill="rgb(205,210,216)" fill-opacity="0.5"/><rect x="559.16" y="100.68" width="4.48" height="1.25" fill="rgb(102,153,204)" fill-opacity="0.45"/><rect x="564.28" y="100.68" width="3.84" height="1.25" fill="rgb(205,210,216)" fill-opacity="0.5"/><rect x="568.76" y="100.68" width="3.84" height="1.25" fill="rgb(205,210,216)" fill-opacity="0.5"/><rect x="573.24" y="100.68" width="3.20" height="1.25" fill="rgb(205,210,216)" fill-opacity="0.5"/><rect x="577.08" y="100.68" width="1.92" height="1.25" fill="rgb(205,210,216)" fill-opacity="0.5"/><rect x="559.16" y="102.40" width="1.28" height="1.25" fill="rgb(205,210,216)" fill-opacity="0.5"/><rect x="561.08" y="102.40" width="1.92" height="1.25" fill="rgb(205,210,216)" fill-opacity="0.5"/><rect x="563.64" y="102.40" width="0.64" height="1.25" fill="rgb(205,210,216)" fill-opacity="0.5"/><rect x="559.16" y="104.12" width="3.20" height="1.25" fill="rgb(201,123,171)" fill-opacity="0.45"/><rect x="563.00" y="104.12" width="5.76" height="1.25" fill="rgb(95,179,179)" fill-opacity="0.45"/><rect x="569.40" y="104.12" width="4.48" height="1.25" fill="rgb(205,210,216)" fill-opacity="0.5"/><rect x="574.52" y="104.12" width="4.48" height="1.25" fill="rgb(102,153,204)" fill-opacity="0.45"/><rect x="579.64" y="104.12" width="5.76" height="1.25" fill="rgb(205,210,216)" fill-opacity="0.5"/><rect x="586.04" y="104.12" width="1.92" height="1.25" fill="rgb(205,210,216)" fill-opacity="0.5"/><rect x="588.60" y="104.12" width="5.76" height="1.25" fill="rgb(205,210,216)" fill-opacity="0.5"/><rect x="595.00" y="104.12" width="1.92" height="1.25" fill="rgb(169,201,145)" fill-opacity="0.45"/><rect x="559.16" y="105.84" width="2.56" height="1.25" fill="rgb(102,153,204)" fill-opacity="0.45"/><rect x="562.36" y="105.84" width="3.84" height="1.25" fill="rgb(236,110,90)" fill-opacity="0.45"/><rect x="566.84" y="105.84" width="2.56" height="1.25" fill="rgb(169,201,145)" fill-opacity="0.45"/><rect x="570.04" y="105.84" width="4.48" height="1.25" fill="rgb(205,210,216)" fill-opacity="0.5"/><rect x="575.16" y="105.84" width="5.76" height="1.25" fill="rgb(102,153,204)" fill-opacity="0.45"/><rect x="557.88" y="109.28" width="5.76" height="1.25" fill="rgb(102,153,204)" fill-opacity="0.45"/><rect x="564.28" y="109.28" width="1.28" height="1.25" fill="rgb(205,210,216)" fill-opacity="0.5"/><rect x="566.20" y="109.28" width="3.84" height="1.25" fill="rgb(205,210,216)" fill-opacity="0.5"/><rect x="570.68" y="109.28" width="1.92" height="1.25" fill="rgb(102,153,204)" fill-opacity="0.45"/><rect x="573.24" y="109.28" width="5.76" height="1.25" fill="rgb(102,153,204)" fill-opacity="0.45"/><rect x="579.64" y="109.28" width="3.84" height="1.25" fill="rgb(205,210,216)" fill-opacity="0.5"/><rect x="559.16" y="111.00" width="1.92" height="1.25" fill="rgb(102,153,204)" fill-opacity="0.45"/><rect x="561.72" y="111.00" width="5.76" height="1.25" fill="rgb(102,153,204)" fill-opacity="0.45"/><rect x="568.12" y="111.00" width="5.76" height="1.25" fill="rgb(160,168,178)" fill-opacity="0.5"/><rect x="574.52" y="111.00" width="3.84" height="1.25" fill="rgb(240,163,92)" fill-opacity="0.45"/><rect x="579.00" y="111.00" width="4.48" height="1.25" fill="rgb(205,210,216)" fill-opacity="0.5"/><rect x="584.12" y="111.00" width="3.84" height="1.25" fill="rgb(160,168,178)" fill-opacity="0.5"/><rect x="560.44" y="112.72" width="4.48" height="1.25" fill="rgb(169,201,145)" fill-opacity="0.45"/><rect x="565.56" y="112.72" width="5.12" height="1.25" fill="rgb(205,210,216)" fill-opacity="0.5"/><rect x="571.32" y="112.72" width="4.48" height="1.25" fill="rgb(169,201,145)" fill-opacity="0.45"/><rect x="576.44" y="112.72" width="2.56" height="1.25" fill="rgb(205,210,216)" fill-opacity="0.5"/><rect x="579.64" y="112.72" width="2.56" height="1.25" fill="rgb(205,210,216)" fill-opacity="0.5"/><rect x="561.72" y="116.16" width="2.56" height="1.25" fill="rgb(102,153,204)" fill-opacity="0.45"/><rect x="564.92" y="116.16" width="1.28" height="1.25" fill="rgb(169,201,145)" fill-opacity="0.45"/><rect x="566.84" y="116.16" width="1.92" height="1.25" fill="rgb(236,110,90)" fill-opacity="0.45"/><rect x="563.00" y="117.88" width="3.84" height="1.25" fill="rgb(205,210,216)" fill-opacity="0.5"/><rect x="567.48" y="117.88" width="4.48" height="1.25" fill="rgb(205,210,216)" fill-opacity="0.5"/><rect x="572.60" y="117.88" width="1.28" height="1.25" fill="rgb(205,210,216)" fill-opacity="0.5"/><rect x="574.52" y="117.88" width="1.92" height="1.25" fill="rgb(169,201,145)" fill-opacity="0.45"/><rect x="577.08" y="117.88" width="3.20" height="1.25" fill="rgb(205,210,216)" fill-opacity="0.5"/><rect x="580.92" y="117.88" width="5.76" height="1.25" fill="rgb(160,168,178)" fill-opacity="0.5"/><rect x="587.32" y="117.88" width="1.92" height="1.25" fill="rgb(240,163,92)" fill-opacity="0.45"/><rect x="563.00" y="119.60" width="2.56" height="1.25" fill="rgb(95,179,179)" fill-opacity="0.45"/><rect x="566.20" y="119.60" width="5.76" height="1.25" fill="rgb(236,110,90)" fill-opacity="0.45"/><rect x="572.60" y="119.60" width="1.92" height="1.25" fill="rgb(205,210,216)" fill-opacity="0.5"/><rect x="575.16" y="119.60" width="5.12" height="1.25" fill="rgb(201,123,171)" fill-opacity="0.45"/><rect x="580.92" y="119.60" width="1.28" height="1.25" fill="rgb(169,201,145)" fill-opacity="0.45"/><rect x="582.84" y="119.60" width="1.28" height="1.25" fill="rgb(240,163,92)" fill-opacity="0.45"/><rect x="563.00" y="121.32" width="1.28" height="1.25" fill="rgb(205,210,216)" fill-opacity="0.5"/><rect x="564.92" y="121.32" width="5.12" height="1.25" fill="rgb(169,201,145)" fill-opacity="0.45"/><rect x="570.68" y="121.32" width="2.56" height="1.25" fill="rgb(205,210,216)" fill-opacity="0.5"/><rect x="573.88" y="121.32" width="2.56" height="1.25" fill="rgb(169,201,145)" fill-opacity="0.45"/><rect x="577.08" y="121.32" width="2.56" height="1.25" fill="rgb(102,153,204)" fill-opacity="0.45"/><rect x="580.28" y="121.32" width="3.20" height="1.25" fill="rgb(169,201,145)" fill-opacity="0.45"/><rect x="584.12" y="121.32" width="5.12" height="1.25" fill="rgb(160,168,178)" fill-opacity="0.5"/><rect x="589.88" y="121.32" width="1.28" height="1.25" fill="rgb(102,153,204)" fill-opacity="0.45"/><rect x="563.00" y="123.04" width="1.92" height="1.25" fill="rgb(102,153,204)" fill-opacity="0.45"/><rect x="565.56" y="123.04" width="2.56" height="1.25" fill="rgb(205,210,216)" fill-opacity="0.5"/><rect x="568.76" y="123.04" width="1.28" height="1.25" fill="rgb(240,163,92)" fill-opacity="0.45"/><rect x="570.68" y="123.04" width="1.28" height="1.25" fill="rgb(95,179,179)" fill-opacity="0.45"/><rect x="572.60" y="123.04" width="0.64" height="1.25" fill="rgb(102,153,204)" fill-opacity="0.45"/><rect x="561.72" y="124.76" width="3.20" height="1.25" fill="rgb(95,179,179)" fill-opacity="0.45"/><rect x="565.56" y="124.76" width="3.20" height="1.25" fill="rgb(240,163,92)" fill-opacity="0.45"/><rect x="569.40" y="124.76" width="2.56" height="1.25" fill="rgb(102,153,204)" fill-opacity="0.45"/><rect x="572.60" y="124.76" width="5.12" height="1.25" fill="rgb(205,210,216)" fill-opacity="0.5"/><rect x="561.72" y="126.48" width="5.76" height="1.25" fill="rgb(102,153,204)" fill-opacity="0.45"/><rect x="568.12" y="126.48" width="5.76" height="1.25" fill="rgb(169,201,145)" fill-opacity="0.45"/><rect x="574.52" y="126.48" width="4.48" height="1.25" fill="rgb(236,110,90)" fill-opacity="0.45"/><rect x="579.64" y="126.48" width="1.92" height="1.25" fill="rgb(95,179,179)" fill-opacity="0.45"/><rect x="582.20" y="126.48" width="3.20" height="1.25" fill="rgb(169,201,145)" fill-opacity="0.45"/><rect x="586.04" y="126.48" width="1.28" height="1.25" fill="rgb(205,210,216)" fill-opacity="0.5"/><rect x="587.96" y="126.48" width="2.56" height="1.25" fill="rgb(169,201,145)" fill-opacity="0.45"/><rect x="591.16" y="126.48" width="3.84" height="1.25" fill="rgb(205,210,216)" fill-opacity="0.5"/><rect x="595.64" y="126.48" width="3.20" height="1.25" fill="rgb(205,210,216)" fill-opacity="0.5"/><rect x="599.48" y="126.48" width="1.28" height="1.25" fill="rgb(201,123,171)" fill-opacity="0.45"/><rect x="561.72" y="128.20" width="2.56" height="1.25" fill="rgb(169,201,145)" fill-opacity="0.45"/><rect x="564.92" y="128.20" width="2.56" height="1.25" fill="rgb(102,153,204)" fill-opacity="0.45"/><rect x="568.12" y="128.20" width="2.56" height="1.25" fill="rgb(102,153,204)" fill-opacity="0.45"/><rect x="571.32" y="128.20" width="2.56" height="1.25" fill="rgb(102,153,204)" fill-opacity="0.45"/><rect x="574.52" y="128.20" width="1.28" height="1.25" fill="rgb(205,210,216)" fill-opacity="0.5"/><rect x="576.44" y="128.20" width="2.56" height="1.25" fill="rgb(205,210,216)" fill-opacity="0.5"/><rect x="563.00" y="129.92" width="2.56" height="1.25" fill="rgb(205,210,216)" fill-opacity="0.5"/><rect x="566.20" y="129.92" width="4.48" height="1.25" fill="rgb(102,153,204)" fill-opacity="0.45"/><rect x="571.32" y="129.92" width="1.92" height="1.25" fill="rgb(95,179,179)" fill-opacity="0.45"/><rect x="573.88" y="129.92" width="5.76" height="1.25" fill="rgb(205,210,216)" fill-opacity="0.5"/><rect x="580.28" y="129.92" width="3.84" height="1.25" fill="rgb(205,210,216)" fill-opacity="0.5"/><rect x="584.76" y="129.92" width="3.20" height="1.25" fill="rgb(169,201,145)" fill-opacity="0.45"/><rect x="588.60" y="129.92" width="3.20" height="1.25" fill="rgb(205,210,216)" fill-opacity="0.5"/><rect x="592.44" y="129.92" width="5.76" height="1.25" fill="rgb(205,210,216)" fill-opacity="0.5"/><rect x="598.84" y="129.92" width="1.28" height="1.25" fill="rgb(236,110,90)" fill-opacity="0.45"/><rect x="559.16" y="133.36" width="4.48" height="1.25" fill="rgb(102,153,204)" fill-opacity="0.45"/><rect x="564.28" y="133.36" width="5.12" height="1.25" fill="rgb(205,210,216)" fill-opacity="0.5"/><rect x="570.04" y="133.36" width="3.84" height="1.25" fill="rgb(240,163,92)" fill-opacity="0.45"/><rect x="574.52" y="133.36" width="1.92" height="1.25" fill="rgb(201,123,171)" fill-opacity="0.45"/><rect x="577.08" y="133.36" width="1.92" height="1.25" fill="rgb(205,210,216)" fill-opacity="0.5"/><rect x="579.64" y="133.36" width="1.92" height="1.25" fill="rgb(169,201,145)" fill-opacity="0.45"/><rect x="582.20" y="133.36" width="5.76" height="1.25" fill="rgb(205,210,216)" fill-opacity="0.5"/><rect x="588.60" y="133.36" width="5.76" height="1.25" fill="rgb(205,210,216)" fill-opacity="0.5"/><rect x="595.00" y="133.36" width="3.84" height="1.25" fill="rgb(95,179,179)" fill-opacity="0.45"/><rect x="560.44" y="135.08" width="1.28" height="1.25" fill="rgb(205,210,216)" fill-opacity="0.5"/><rect x="562.36" y="135.08" width="2.56" height="1.25" fill="rgb(102,153,204)" fill-opacity="0.45"/><rect x="565.56" y="135.08" width="5.12" height="1.25" fill="rgb(236,110,90)" fill-opacity="0.45"/><rect x="571.32" y="135.08" width="3.84" height="1.25" fill="rgb(102,153,204)" fill-opacity="0.45"/><rect x="575.80" y="135.08" width="5.12" height="1.25" fill="rgb(236,110,90)" fill-opacity="0.45"/><rect x="581.56" y="135.08" width="1.92" height="1.25" fill="rgb(102,153,204)" fill-opacity="0.45"/><rect x="584.12" y="135.08" width="2.56" height="1.25" fill="rgb(205,210,216)" fill-opacity="0.5"/><rect x="561.72" y="136.80" width="3.84" height="1.25" fill="rgb(95,179,179)" fill-opacity="0.45"/><rect x="566.20" y="136.80" width="4.48" height="1.25" fill="rgb(240,163,92)" fill-opacity="0.45"/><rect x="571.32" y="136.80" width="3.20" height="1.25" fill="rgb(205,210,216)" fill-opacity="0.5"/><rect x="560.44" y="138.52" width="2.56" height="1.25" fill="rgb(205,210,216)" fill-opacity="0.5"/><rect x="563.64" y="138.52" width="3.20" height="1.25" fill="rgb(169,201,145)" fill-opacity="0.45"/><rect x="567.48" y="138.52" width="1.28" height="1.25" fill="rgb(240,163,92)" fill-opacity="0.45"/><rect x="569.40" y="138.52" width="1.92" height="1.25" fill="rgb(205,210,216)" fill-opacity="0.5"/><rect x="571.96" y="138.52" width="3.20" height="1.25" fill="rgb(205,210,216)" fill-opacity="0.5"/><rect x="575.80" y="138.52" width="2.56" height="1.25" fill="rgb(205,210,216)" fill-opacity="0.5"/><rect x="579.00" y="138.52" width="5.12" height="1.25" fill="rgb(169,201,145)" fill-opacity="0.45"/><rect x="584.76" y="138.52" width="1.92" height="1.25" fill="rgb(102,153,204)" fill-opacity="0.45"/><rect x="587.32" y="138.52" width="0.64" height="1.25" fill="rgb(160,168,178)" fill-opacity="0.5"/><rect x="559.16" y="140.24" width="5.12" height="1.25" fill="rgb(95,179,179)" fill-opacity="0.45"/><rect x="564.92" y="140.24" width="4.48" height="1.25" fill="rgb(169,201,145)" fill-opacity="0.45"/><rect x="570.04" y="140.24" width="1.28" height="1.25" fill="rgb(169,201,145)" fill-opacity="0.45"/><rect x="571.96" y="140.24" width="3.84" height="1.25" fill="rgb(205,210,216)" fill-opacity="0.5"/><rect x="559.16" y="141.96" width="1.28" height="1.25" fill="rgb(102,153,204)" fill-opacity="0.45"/><rect x="560.44" y="143.68" width="3.20" height="1.25" fill="rgb(160,168,178)" fill-opacity="0.5"/><rect x="564.28" y="143.68" width="4.48" height="1.25" fill="rgb(102,153,204)" fill-opacity="0.45"/><rect x="569.40" y="143.68" width="1.92" height="1.25" fill="rgb(205,210,216)" fill-opacity="0.5"/><rect x="571.96" y="143.68" width="3.84" height="1.25" fill="rgb(236,110,90)" fill-opacity="0.45"/><rect x="576.44" y="143.68" width="3.84" height="1.25" fill="rgb(236,110,90)" fill-opacity="0.45"/><rect x="580.92" y="143.68" width="3.20" height="1.25" fill="rgb(201,123,171)" fill-opacity="0.45"/><rect x="560.44" y="145.40" width="3.20" height="1.25" fill="rgb(160,168,178)" fill-opacity="0.5"/><rect x="564.28" y="145.40" width="3.20" height="1.25" fill="rgb(205,210,216)" fill-opacity="0.5"/><rect x="568.12" y="145.40" width="3.20" height="1.25" fill="rgb(205,210,216)" fill-opacity="0.5"/><rect x="571.96" y="145.40" width="2.56" height="1.25" fill="rgb(205,210,216)" fill-opacity="0.5"/><rect x="575.16" y="145.40" width="5.76" height="1.25" fill="rgb(169,201,145)" fill-opacity="0.45"/><rect x="581.56" y="145.40" width="3.84" height="1.25" fill="rgb(102,153,204)" fill-opacity="0.45"/><rect x="561.72" y="148.84" width="2.56" height="1.25" fill="rgb(205,210,216)" fill-opacity="0.5"/><rect x="564.92" y="148.84" width="1.92" height="1.25" fill="rgb(236,110,90)" fill-opacity="0.45"/><rect x="567.48" y="148.84" width="3.84" height="1.25" fill="rgb(205,210,216)" fill-opacity="0.5"/><rect x="571.96" y="148.84" width="4.48" height="1.25" fill="rgb(205,210,216)" fill-opacity="0.5"/><rect x="577.08" y="148.84" width="1.92" height="1.25" fill="rgb(205,210,216)" fill-opacity="0.5"/><rect x="579.64" y="148.84" width="3.84" height="1.25" fill="rgb(201,123,171)" fill-opacity="0.45"/><rect x="584.12" y="148.84" width="1.92" height="1.25" fill="rgb(201,123,171)" fill-opacity="0.45"/><rect x="561.72" y="150.56" width="1.92" height="1.25" fill="rgb(240,163,92)" fill-opacity="0.45"/><rect x="564.28" y="150.56" width="1.28" height="1.25" fill="rgb(169,201,145)" fill-opacity="0.45"/><rect x="566.20" y="150.56" width="2.56" height="1.25" fill="rgb(205,210,216)" fill-opacity="0.5"/><rect x="569.40" y="150.56" width="3.84" height="1.25" fill="rgb(169,201,145)" fill-opacity="0.45"/><rect x="573.88" y="150.56" width="1.28" height="1.25" fill="rgb(205,210,216)" fill-opacity="0.5"/><rect x="575.80" y="150.56" width="1.92" height="1.25" fill="rgb(169,201,145)" fill-opacity="0.45"/><rect x="561.72" y="152.28" width="5.12" height="1.25" fill="rgb(205,210,216)" fill-opacity="0.5"/><rect x="567.48" y="152.28" width="4.48" height="1.25" fill="rgb(160,168,178)" fill-opacity="0.5"/><rect x="572.60" y="152.28" width="2.56" height="1.25" fill="rgb(102,153,204)" fill-opacity="0.45"/><rect x="559.16" y="155.72" width="2.56" height="1.25" fill="rgb(169,201,145)" fill-opacity="0.45"/><rect x="562.36" y="155.72" width="5.76" height="1.25" fill="rgb(205,210,216)" fill-opacity="0.5"/><rect x="559.16" y="157.44" width="5.12" height="1.25" fill="rgb(102,153,204)" fill-opacity="0.45"/><rect x="564.92" y="157.44" width="5.76" height="1.25" fill="rgb(240,163,92)" fill-opacity="0.45"/><rect x="571.32" y="157.44" width="5.12" height="1.25" fill="rgb(169,201,145)" fill-opacity="0.45"/><rect x="577.08" y="157.44" width="1.92" height="1.25" fill="rgb(205,210,216)" fill-opacity="0.5"/><rect x="579.64" y="157.44" width="2.56" height="1.25" fill="rgb(160,168,178)" fill-opacity="0.5"/><rect x="559.16" y="159.16" width="0.64" height="1.25" fill="rgb(169,201,145)" fill-opacity="0.45"/><rect x="559.16" y="160.88" width="3.84" height="1.25" fill="rgb(205,210,216)" fill-opacity="0.5"/><rect x="563.64" y="160.88" width="3.20" height="1.25" fill="rgb(205,210,216)" fill-opacity="0.5"/><rect x="567.48" y="160.88" width="5.76" height="1.25" fill="rgb(205,210,216)" fill-opacity="0.5"/><rect x="573.88" y="160.88" width="5.12" height="1.25" fill="rgb(205,210,216)" fill-opacity="0.5"/><rect x="579.64" y="160.88" width="5.76" height="1.25" fill="rgb(205,210,216)" fill-opacity="0.5"/><rect x="586.04" y="160.88" width="0.64" height="1.25" fill="rgb(236,110,90)" fill-opacity="0.45"/><rect x="560.44" y="162.60" width="1.92" height="1.25" fill="rgb(201,123,171)" fill-opacity="0.45"/><rect x="563.00" y="162.60" width="5.12" height="1.25" fill="rgb(205,210,216)" fill-opacity="0.5"/><rect x="568.76" y="162.60" width="3.20" height="1.25" fill="rgb(169,201,145)" fill-opacity="0.45"/><rect x="572.60" y="162.60" width="1.92" height="1.25" fill="rgb(205,210,216)" fill-opacity="0.5"/><rect x="575.16" y="162.60" width="1.92" height="1.25" fill="rgb(160,168,178)" fill-opacity="0.5"/><rect x="577.72" y="162.60" width="2.56" height="1.25" fill="rgb(205,210,216)" fill-opacity="0.5"/><rect x="580.92" y="162.60" width="1.92" height="1.25" fill="rgb(205,210,216)" fill-opacity="0.5"/><rect x="556.60" y="166.04" width="5.76" height="1.25" fill="rgb(240,163,92)" fill-opacity="0.45"/><rect x="563.00" y="166.04" width="0.64" height="1.25" fill="rgb(205,210,216)" fill-opacity="0.5"/><rect x="557.88" y="167.76" width="0.64" height="1.25" fill="rgb(102,153,204)" fill-opacity="0.45"/><rect x="559.16" y="169.48" width="5.76" height="1.25" fill="rgb(205,210,216)" fill-opacity="0.5"/><rect x="565.56" y="169.48" width="3.20" height="1.25" fill="rgb(102,153,204)" fill-opacity="0.45"/><rect x="569.40" y="169.48" width="1.28" height="1.25" fill="rgb(205,210,216)" fill-opacity="0.5"/><rect x="571.32" y="169.48" width="4.48" height="1.25" fill="rgb(201,123,171)" fill-opacity="0.45"/><rect x="576.44" y="169.48" width="5.76" height="1.25" fill="rgb(205,210,216)" fill-opacity="0.5"/><rect x="582.84" y="169.48" width="1.28" height="1.25" fill="rgb(236,110,90)" fill-opacity="0.45"/><rect x="560.44" y="171.20" width="1.28" height="1.25" fill="rgb(205,210,216)" fill-opacity="0.5"/><rect x="562.36" y="171.20" width="3.84" height="1.25" fill="rgb(102,153,204)" fill-opacity="0.45"/><rect x="566.84" y="171.20" width="3.84" height="1.25" fill="rgb(169,201,145)" fill-opacity="0.45"/><rect x="571.32" y="171.20" width="2.56" height="1.25" fill="rgb(102,153,204)" fill-opacity="0.45"/><rect x="574.52" y="171.20" width="5.76" height="1.25" fill="rgb(169,201,145)" fill-opacity="0.45"/><rect x="580.92" y="171.20" width="1.92" height="1.25" fill="rgb(205,210,216)" fill-opacity="0.5"/><rect x="583.48" y="171.20" width="3.20" height="1.25" fill="rgb(102,153,204)" fill-opacity="0.45"/><rect x="587.32" y="171.20" width="1.28" height="1.25" fill="rgb(205,210,216)" fill-opacity="0.5"/><rect x="561.72" y="172.92" width="3.84" height="1.25" fill="rgb(102,153,204)" fill-opacity="0.45"/><rect x="566.20" y="172.92" width="4.48" height="1.25" fill="rgb(160,168,178)" fill-opacity="0.5"/><rect x="571.32" y="172.92" width="1.92" height="1.25" fill="rgb(160,168,178)" fill-opacity="0.5"/><rect x="573.88" y="172.92" width="3.20" height="1.25" fill="rgb(102,153,204)" fill-opacity="0.45"/><rect x="577.72" y="172.92" width="2.56" height="1.25" fill="rgb(205,210,216)" fill-opacity="0.5"/><rect x="580.92" y="172.92" width="3.84" height="1.25" fill="rgb(205,210,216)" fill-opacity="0.5"/><rect x="585.40" y="172.92" width="1.92" height="1.25" fill="rgb(240,163,92)" fill-opacity="0.45"/><rect x="587.96" y="172.92" width="1.92" height="1.25" fill="rgb(240,163,92)" fill-opacity="0.45"/><rect x="590.52" y="172.92" width="1.92" height="1.25" fill="rgb(160,168,178)" fill-opacity="0.5"/><rect x="561.72" y="174.64" width="3.84" height="1.25" fill="rgb(169,201,145)" fill-opacity="0.45"/><rect x="566.20" y="174.64" width="0.64" height="1.25" fill="rgb(205,210,216)" fill-opacity="0.5"/><rect x="559.16" y="178.08" width="1.28" height="1.25" fill="rgb(205,210,216)" fill-opacity="0.5"/><rect x="561.08" y="178.08" width="2.56" height="1.25" fill="rgb(205,210,216)" fill-opacity="0.5"/><rect x="564.28" y="178.08" width="5.76" height="1.25" fill="rgb(169,201,145)" fill-opacity="0.45"/><rect x="570.68" y="178.08" width="1.28" height="1.25" fill="rgb(95,179,179)" fill-opacity="0.45"/><rect x="572.60" y="178.08" width="1.28" height="1.25" fill="rgb(205,210,216)" fill-opacity="0.5"/><rect x="574.52" y="178.08" width="0.64" height="1.25" fill="rgb(236,110,90)" fill-opacity="0.45"/><rect x="559.16" y="179.80" width="5.76" height="1.25" fill="rgb(205,210,216)" fill-opacity="0.5"/><rect x="565.56" y="179.80" width="3.84" height="1.25" fill="rgb(160,168,178)" fill-opacity="0.5"/><rect x="570.04" y="179.80" width="2.56" height="1.25" fill="rgb(205,210,216)" fill-opacity="0.5"/><rect x="573.24" y="179.80" width="1.92" height="1.25" fill="rgb(169,201,145)" fill-opacity="0.45"/><rect x="575.80" y="179.80" width="3.20" height="1.25" fill="rgb(240,163,92)" fill-opacity="0.45"/><rect x="579.64" y="179.80" width="3.84" height="1.25" fill="rgb(205,210,216)" fill-opacity="0.5"/><rect x="584.12" y="179.80" width="3.84" height="1.25" fill="rgb(95,179,179)" fill-opacity="0.45"/><rect x="588.60" y="179.80" width="3.20" height="1.25" fill="rgb(95,179,179)" fill-opacity="0.45"/><rect x="592.44" y="179.80" width="3.84" height="1.25" fill="rgb(205,210,216)" fill-opacity="0.5"/><rect x="560.44" y="181.52" width="1.28" height="1.25" fill="rgb(102,153,204)" fill-opacity="0.45"/><rect x="559.16" y="183.24" width="5.12" height="1.25" fill="rgb(160,168,178)" fill-opacity="0.5"/><rect x="564.92" y="183.24" width="0.64" height="1.25" fill="rgb(102,153,204)" fill-opacity="0.45"/><rect x="559.16" y="184.96" width="0.64" height="1.25" fill="rgb(205,210,216)" fill-opacity="0.5"/><rect x="557.88" y="186.68" width="3.84" height="1.25" fill="rgb(95,179,179)" fill-opacity="0.45"/><rect x="562.36" y="186.68" width="1.92" height="1.25" fill="rgb(160,168,178)" fill-opacity="0.5"/><rect x="564.92" y="186.68" width="2.56" height="1.25" fill="rgb(169,201,145)" fill-opacity="0.45"/><rect x="568.12" y="186.68" width="3.84" height="1.25" fill="rgb(205,210,216)" fill-opacity="0.5"/><rect x="572.60" y="186.68" width="2.56" height="1.25" fill="rgb(95,179,179)" fill-opacity="0.45"/><rect x="575.80" y="186.68" width="5.12" height="1.25" fill="rgb(205,210,216)" fill-opacity="0.5"/><rect x="557.88" y="190.12" width="1.28" height="1.25" fill="rgb(205,210,216)" fill-opacity="0.5"/><rect x="559.80" y="190.12" width="5.76" height="1.25" fill="rgb(205,210,216)" fill-opacity="0.5"/><rect x="566.20" y="190.12" width="2.56" height="1.25" fill="rgb(240,163,92)" fill-opacity="0.45"/><rect x="569.40" y="190.12" width="1.28" height="1.25" fill="rgb(205,210,216)" fill-opacity="0.5"/><rect x="571.32" y="190.12" width="3.20" height="1.25" fill="rgb(169,201,145)" fill-opacity="0.45"/><rect x="575.16" y="190.12" width="2.56" height="1.25" fill="rgb(205,210,216)" fill-opacity="0.5"/><rect x="578.36" y="190.12" width="5.12" height="1.25" fill="rgb(236,110,90)" fill-opacity="0.45"/><rect x="584.12" y="190.12" width="3.84" height="1.25" fill="rgb(95,179,179)" fill-opacity="0.45"/><rect x="557.88" y="191.84" width="1.92" height="1.25" fill="rgb(102,153,204)" fill-opacity="0.45"/><rect x="559.16" y="193.56" width="5.76" height="1.25" fill="rgb(205,210,216)" fill-opacity="0.5"/><rect x="565.56" y="193.56" width="3.20" height="1.25" fill="rgb(201,123,171)" fill-opacity="0.45"/><rect x="569.40" y="193.56" width="3.84" height="1.25" fill="rgb(102,153,204)" fill-opacity="0.45"/><rect x="573.88" y="193.56" width="3.20" height="1.25" fill="rgb(205,210,216)" fill-opacity="0.5"/><rect x="577.72" y="193.56" width="2.56" height="1.25" fill="rgb(169,201,145)" fill-opacity="0.45"/><rect x="580.92" y="193.56" width="1.28" height="1.25" fill="rgb(102,153,204)" fill-opacity="0.45"/><rect x="582.84" y="193.56" width="2.56" height="1.25" fill="rgb(240,163,92)" fill-opacity="0.45"/><rect x="559.16" y="195.28" width="5.12" height="1.25" fill="rgb(205,210,216)" fill-opacity="0.5"/><rect x="564.92" y="195.28" width="3.20" height="1.25" fill="rgb(169,201,145)" fill-opacity="0.45"/><rect x="568.76" y="195.28" width="4.48" height="1.25" fill="rgb(205,210,216)" fill-opacity="0.5"/><rect x="573.88" y="195.28" width="2.56" height="1.25" fill="rgb(236,110,90)" fill-opacity="0.45"/><rect x="577.08" y="195.28" width="2.56" height="1.25" fill="rgb(95,179,179)" fill-opacity="0.45"/><rect x="580.28" y="195.28" width="3.20" height="1.25" fill="rgb(169,201,145)" fill-opacity="0.45"/><rect x="584.12" y="195.28" width="3.20" height="1.25" fill="rgb(240,163,92)" fill-opacity="0.45"/><rect x="587.96" y="195.28" width="3.84" height="1.25" fill="rgb(95,179,179)" fill-opacity="0.45"/><rect x="592.44" y="195.28" width="5.76" height="1.25" fill="rgb(95,179,179)" fill-opacity="0.45"/><rect x="559.16" y="197.00" width="3.20" height="1.25" fill="rgb(236,110,90)" fill-opacity="0.45"/><rect x="563.00" y="197.00" width="5.12" height="1.25" fill="rgb(169,201,145)" fill-opacity="0.45"/><rect x="568.76" y="197.00" width="1.92" height="1.25" fill="rgb(205,210,216)" fill-opacity="0.5"/><rect x="571.32" y="197.00" width="3.84" height="1.25" fill="rgb(201,123,171)" fill-opacity="0.45"/><rect x="575.80" y="197.00" width="3.84" height="1.25" fill="rgb(205,210,216)" fill-opacity="0.5"/><rect x="580.28" y="197.00" width="2.56" height="1.25" fill="rgb(102,153,204)" fill-opacity="0.45"/><rect x="583.48" y="197.00" width="5.12" height="1.25" fill="rgb(205,210,216)" fill-opacity="0.5"/><rect x="560.44" y="198.72" width="4.48" height="1.25" fill="rgb(205,210,216)" fill-opacity="0.5"/><rect x="565.56" y="198.72" width="3.20" height="1.25" fill="rgb(205,210,216)" fill-opacity="0.5"/><rect x="569.40" y="198.72" width="1.28" height="1.25" fill="rgb(102,153,204)" fill-opacity="0.45"/><rect x="571.32" y="198.72" width="5.12" height="1.25" fill="rgb(240,163,92)" fill-opacity="0.45"/><rect x="577.08" y="198.72" width="1.92" height="1.25" fill="rgb(169,201,145)" fill-opacity="0.45"/><rect x="579.64" y="198.72" width="2.56" height="1.25" fill="rgb(102,153,204)" fill-opacity="0.45"/><rect x="560.44" y="200.44" width="1.28" height="1.25" fill="rgb(95,179,179)" fill-opacity="0.45"/><rect x="556.60" y="203.88" width="1.28" height="1.25" fill="rgb(169,201,145)" fill-opacity="0.45"/><rect x="556.60" y="205.60" width="3.84" height="1.25" fill="rgb(102,153,204)" fill-opacity="0.45"/><rect x="561.08" y="205.60" width="5.76" height="1.25" fill="rgb(169,201,145)" fill-opacity="0.45"/><rect x="567.48" y="205.60" width="2.56" height="1.25" fill="rgb(205,210,216)" fill-opacity="0.5"/><rect x="570.68" y="205.60" width="3.84" height="1.25" fill="rgb(236,110,90)" fill-opacity="0.45"/><rect x="575.16" y="205.60" width="5.76" height="1.25" fill="rgb(169,201,145)" fill-opacity="0.45"/><rect x="581.56" y="205.60" width="2.56" height="1.25" fill="rgb(169,201,145)" fill-opacity="0.45"/><rect x="584.76" y="205.60" width="1.92" height="1.25" fill="rgb(205,210,216)" fill-opacity="0.5"/><rect x="559.16" y="209.04" width="1.28" height="1.25" fill="rgb(95,179,179)" fill-opacity="0.45"/><rect x="561.08" y="209.04" width="1.28" height="1.25" fill="rgb(102,153,204)" fill-opacity="0.45"/><rect x="563.00" y="209.04" width="1.92" height="1.25" fill="rgb(205,210,216)" fill-opacity="0.5"/><rect x="565.56" y="209.04" width="4.48" height="1.25" fill="rgb(205,210,216)" fill-opacity="0.5"/><rect x="570.68" y="209.04" width="4.48" height="1.25" fill="rgb(205,210,216)" fill-opacity="0.5"/><rect x="575.80" y="209.04" width="3.84" height="1.25" fill="rgb(205,210,216)" fill-opacity="0.5"/><rect x="580.28" y="209.04" width="5.12" height="1.25" fill="rgb(205,210,216)" fill-opacity="0.5"/><rect x="586.04" y="209.04" width="0.64" height="1.25" fill="rgb(95,179,179)" fill-opacity="0.45"/><rect x="557.88" y="210.76" width="5.76" height="1.25" fill="rgb(102,153,204)" fill-opacity="0.45"/><rect x="564.28" y="210.76" width="3.20" height="1.25" fill="rgb(205,210,216)" fill-opacity="0.5"/><rect x="568.12" y="210.76" width="5.12" height="1.25" fill="rgb(205,210,216)" fill-opacity="0.5"/><rect x="573.88" y="210.76" width="5.76" height="1.25" fill="rgb(205,210,216)" fill-opacity="0.5"/><rect x="559.16" y="212.48" width="4.48" height="1.25" fill="rgb(169,201,145)" fill-opacity="0.45"/><rect x="564.28" y="212.48" width="2.56" height="1.25" fill="rgb(95,179,179)" fill-opacity="0.45"/><rect x="567.48" y="212.48" width="3.84" height="1.25" fill="rgb(236,110,90)" fill-opacity="0.45"/><rect x="571.96" y="212.48" width="3.84" height="1.25" fill="rgb(205,210,216)" fill-opacity="0.5"/><rect x="576.44" y="212.48" width="5.12" height="1.25" fill="rgb(205,210,216)" fill-opacity="0.5"/><rect x="582.20" y="212.48" width="4.48" height="1.25" fill="rgb(205,210,216)" fill-opacity="0.5"/><rect x="587.32" y="212.48" width="1.92" height="1.25" fill="rgb(102,153,204)" fill-opacity="0.45"/><rect x="557.88" y="215.92" width="4.48" height="1.25" fill="rgb(102,153,204)" fill-opacity="0.45"/><rect x="563.00" y="215.92" width="1.92" height="1.25" fill="rgb(205,210,216)" fill-opacity="0.5"/><rect x="565.56" y="215.92" width="1.28" height="1.25" fill="rgb(201,123,171)" fill-opacity="0.45"/><rect x="567.48" y="215.92" width="4.48" height="1.25" fill="rgb(201,123,171)" fill-opacity="0.45"/><rect x="572.60" y="215.92" width="3.84" height="1.25" fill="rgb(102,153,204)" fill-opacity="0.45"/><rect x="577.08" y="215.92" width="2.56" height="1.25" fill="rgb(95,179,179)" fill-opacity="0.45"/><rect x="580.28" y="215.92" width="4.48" height="1.25" fill="rgb(102,153,204)" fill-opacity="0.45"/><rect x="557.88" y="217.64" width="3.20" height="1.25" fill="rgb(205,210,216)" fill-opacity="0.5"/><rect x="561.72" y="217.64" width="1.28" height="1.25" fill="rgb(236,110,90)" fill-opacity="0.45"/><rect x="563.64" y="217.64" width="5.12" height="1.25" fill="rgb(169,201,145)" fill-opacity="0.45"/><rect x="569.40" y="217.64" width="1.92" height="1.25" fill="rgb(102,153,204)" fill-opacity="0.45"/><rect x="571.96" y="217.64" width="1.92" height="1.25" fill="rgb(240,163,92)" fill-opacity="0.45"/><rect x="574.52" y="217.64" width="5.12" height="1.25" fill="rgb(169,201,145)" fill-opacity="0.45"/><rect x="556.60" y="221.08" width="5.76" height="1.25" fill="rgb(201,123,171)" fill-opacity="0.45"/><rect x="563.00" y="221.08" width="5.76" height="1.25" fill="rgb(205,210,216)" fill-opacity="0.5"/><rect x="569.40" y="221.08" width="2.56" height="1.25" fill="rgb(205,210,216)" fill-opacity="0.5"/><rect x="572.60" y="221.08" width="3.84" height="1.25" fill="rgb(205,210,216)" fill-opacity="0.5"/><rect x="577.08" y="221.08" width="3.84" height="1.25" fill="rgb(205,210,216)" fill-opacity="0.5"/><rect x="581.56" y="221.08" width="3.20" height="1.25" fill="rgb(160,168,178)" fill-opacity="0.5"/><rect x="585.40" y="221.08" width="0.64" height="1.25" fill="rgb(236,110,90)" fill-opacity="0.45"/><rect x="556.60" y="222.80" width="1.92" height="1.25" fill="rgb(236,110,90)" fill-opacity="0.45"/><rect x="559.16" y="222.80" width="1.28" height="1.25" fill="rgb(102,153,204)" fill-opacity="0.45"/><rect x="557.88" y="224.52" width="3.20" height="1.25" fill="rgb(169,201,145)" fill-opacity="0.45"/><rect x="561.72" y="224.52" width="2.56" height="1.25" fill="rgb(205,210,216)" fill-opacity="0.5"/><rect x="564.92" y="224.52" width="2.56" height="1.25" fill="rgb(205,210,216)" fill-opacity="0.5"/><rect x="568.12" y="224.52" width="4.48" height="1.25" fill="rgb(95,179,179)" fill-opacity="0.45"/><rect x="573.24" y="224.52" width="3.84" height="1.25" fill="rgb(201,123,171)" fill-opacity="0.45"/><rect x="577.72" y="224.52" width="5.12" height="1.25" fill="rgb(102,153,204)" fill-opacity="0.45"/><rect x="583.48" y="224.52" width="4.48" height="1.25" fill="rgb(236,110,90)" fill-opacity="0.45"/><rect x="588.60" y="224.52" width="5.76" height="1.25" fill="rgb(205,210,216)" fill-opacity="0.5"/><rect x="557.88" y="226.24" width="2.56" height="1.25" fill="rgb(205,210,216)" fill-opacity="0.5"/><rect x="561.08" y="226.24" width="1.92" height="1.25" fill="rgb(205,210,216)" fill-opacity="0.5"/><rect x="563.64" y="226.24" width="3.84" height="1.25" fill="rgb(205,210,216)" fill-opacity="0.5"/><rect x="568.12" y="226.24" width="5.76" height="1.25" fill="rgb(160,168,178)" fill-opacity="0.5"/><rect x="574.52" y="226.24" width="5.12" height="1.25" fill="rgb(205,210,216)" fill-opacity="0.5"/><rect x="556.60" y="227.96" width="1.28" height="1.25" fill="rgb(201,123,171)" fill-opacity="0.45"/><rect x="558.52" y="227.96" width="3.84" height="1.25" fill="rgb(169,201,145)" fill-opacity="0.45"/><rect x="563.00" y="227.96" width="5.12" height="1.25" fill="rgb(102,153,204)" fill-opacity="0.45"/><rect x="568.76" y="227.96" width="3.84" height="1.25" fill="rgb(201,123,171)" fill-opacity="0.45"/><rect x="573.24" y="227.96" width="4.48" height="1.25" fill="rgb(205,210,216)" fill-opacity="0.5"/><rect x="578.36" y="227.96" width="4.48" height="1.25" fill="rgb(205,210,216)" fill-opacity="0.5"/><rect x="583.48" y="227.96" width="2.56" height="1.25" fill="rgb(169,201,145)" fill-opacity="0.45"/><rect x="586.68" y="227.96" width="2.56" height="1.25" fill="rgb(102,153,204)" fill-opacity="0.45"/><rect x="589.88" y="227.96" width="2.56" height="1.25" fill="rgb(205,210,216)" fill-opacity="0.5"/><rect x="557.88" y="229.68" width="2.56" height="1.25" fill="rgb(205,210,216)" fill-opacity="0.5"/><rect x="561.08" y="229.68" width="5.76" height="1.25" fill="rgb(205,210,216)" fill-opacity="0.5"/><rect x="567.48" y="229.68" width="3.84" height="1.25" fill="rgb(102,153,204)" fill-opacity="0.45"/><rect x="571.96" y="229.68" width="5.12" height="1.25" fill="rgb(102,153,204)" fill-opacity="0.45"/><rect x="577.72" y="229.68" width="5.12" height="1.25" fill="rgb(169,201,145)" fill-opacity="0.45"/><rect x="583.48" y="229.68" width="1.92" height="1.25" fill="rgb(205,210,216)" fill-opacity="0.5"/><rect x="556.60" y="231.40" width="3.20" height="1.25" fill="rgb(102,153,204)" fill-opacity="0.45"/><rect x="560.44" y="231.40" width="4.48" height="1.25" fill="rgb(236,110,90)" fill-opacity="0.45"/><rect x="565.56" y="231.40" width="1.92" height="1.25" fill="rgb(169,201,145)" fill-opacity="0.45"/><rect x="568.12" y="231.40" width="4.48" height="1.25" fill="rgb(205,210,216)" fill-opacity="0.5"/><rect x="573.24" y="231.40" width="5.76" height="1.25" fill="rgb(205,210,216)" fill-opacity="0.5"/><rect x="579.64" y="231.40" width="4.48" height="1.25" fill="rgb(205,210,216)" fill-opacity="0.5"/><rect x="584.76" y="231.40" width="3.84" height="1.25" fill="rgb(240,163,92)" fill-opacity="0.45"/><rect x="589.24" y="231.40" width="3.84" height="1.25" fill="rgb(205,210,216)" fill-opacity="0.5"/><rect x="593.72" y="231.40" width="5.12" height="1.25" fill="rgb(169,201,145)" fill-opacity="0.45"/><rect x="599.48" y="231.40" width="2.56" height="1.25" fill="rgb(169,201,145)" fill-opacity="0.45"/><rect x="556.60" y="233.12" width="2.56" height="1.25" fill="rgb(240,163,92)" fill-opacity="0.45"/><rect x="559.80" y="233.12" width="2.56" height="1.25" fill="rgb(205,210,216)" fill-opacity="0.5"/><rect x="563.00" y="233.12" width="3.84" height="1.25" fill="rgb(95,179,179)" fill-opacity="0.45"/><rect x="567.48" y="233.12" width="5.12" height="1.25" fill="rgb(205,210,216)" fill-opacity="0.5"/><rect x="573.24" y="233.12" width="0.64" height="1.25" fill="rgb(102,153,204)" fill-opacity="0.45"/><rect x="557.88" y="236.56" width="3.84" height="1.25" fill="rgb(102,153,204)" fill-opacity="0.45"/><rect x="562.36" y="236.56" width="3.20" height="1.25" fill="rgb(205,210,216)" fill-opacity="0.5"/><rect x="566.20" y="236.56" width="5.76" height="1.25" fill="rgb(205,210,216)" fill-opacity="0.5"/><rect x="559.16" y="238.28" width="0.64" height="1.25" fill="rgb(102,153,204)" fill-opacity="0.45"/><rect x="556.60" y="241.72" width="3.20" height="1.25" fill="rgb(169,201,145)" fill-opacity="0.45"/><rect x="560.44" y="241.72" width="5.76" height="1.25" fill="rgb(205,210,216)" fill-opacity="0.5"/><rect x="566.84" y="241.72" width="5.12" height="1.25" fill="rgb(201,123,171)" fill-opacity="0.45"/><rect x="572.60" y="241.72" width="5.12" height="1.25" fill="rgb(236,110,90)" fill-opacity="0.45"/><rect x="578.36" y="241.72" width="1.28" height="1.25" fill="rgb(205,210,216)" fill-opacity="0.5"/><rect x="580.28" y="241.72" width="0.64" height="1.25" fill="rgb(102,153,204)" fill-opacity="0.45"/><rect x="556.60" y="243.44" width="5.76" height="1.25" fill="rgb(205,210,216)" fill-opacity="0.5"/><rect x="563.00" y="243.44" width="2.56" height="1.25" fill="rgb(205,210,216)" fill-opacity="0.5"/><rect x="566.20" y="243.44" width="2.56" height="1.25" fill="rgb(236,110,90)" fill-opacity="0.45"/><rect x="569.40" y="243.44" width="1.92" height="1.25" fill="rgb(205,210,216)" fill-opacity="0.5"/><rect x="571.96" y="243.44" width="3.84" height="1.25" fill="rgb(201,123,171)" fill-opacity="0.45"/><rect x="556.60" y="245.16" width="1.28" height="1.25" fill="rgb(205,210,216)" fill-opacity="0.5"/><rect x="556.60" y="248.60" width="5.76" height="1.25" fill="rgb(169,201,145)" fill-opacity="0.45"/><rect x="563.00" y="248.60" width="3.84" height="1.25" fill="rgb(236,110,90)" fill-opacity="0.45"/><rect x="567.48" y="248.60" width="1.92" height="1.25" fill="rgb(95,179,179)" fill-opacity="0.45"/><rect x="570.04" y="248.60" width="5.12" height="1.25" fill="rgb(169,201,145)" fill-opacity="0.45"/><rect x="575.80" y="248.60" width="3.84" height="1.25" fill="rgb(205,210,216)" fill-opacity="0.5"/><rect x="580.28" y="248.60" width="1.28" height="1.25" fill="rgb(205,210,216)" fill-opacity="0.5"/><rect x="557.88" y="250.32" width="3.84" height="1.25" fill="rgb(201,123,171)" fill-opacity="0.45"/><rect x="562.36" y="250.32" width="5.76" height="1.25" fill="rgb(201,123,171)" fill-opacity="0.45"/><rect x="568.76" y="250.32" width="3.84" height="1.25" fill="rgb(102,153,204)" fill-opacity="0.45"/><rect x="573.24" y="250.32" width="1.92" height="1.25" fill="rgb(102,153,204)" fill-opacity="0.45"/><rect x="575.80" y="250.32" width="1.92" height="1.25" fill="rgb(102,153,204)" fill-opacity="0.45"/><rect x="578.36" y="250.32" width="1.92" height="1.25" fill="rgb(205,210,216)" fill-opacity="0.5"/><rect x="557.88" y="252.04" width="3.84" height="1.25" fill="rgb(205,210,216)" fill-opacity="0.5"/><rect x="562.36" y="252.04" width="2.56" height="1.25" fill="rgb(201,123,171)" fill-opacity="0.45"/><rect x="565.56" y="252.04" width="1.92" height="1.25" fill="rgb(205,210,216)" fill-opacity="0.5"/><rect x="568.12" y="252.04" width="2.56" height="1.25" fill="rgb(201,123,171)" fill-opacity="0.45"/><rect x="571.32" y="252.04" width="3.84" height="1.25" fill="rgb(205,210,216)" fill-opacity="0.5"/><rect x="556.60" y="255.48" width="4.48" height="1.25" fill="rgb(236,110,90)" fill-opacity="0.45"/><rect x="561.72" y="255.48" width="3.20" height="1.25" fill="rgb(205,210,216)" fill-opacity="0.5"/><rect x="565.56" y="255.48" width="2.56" height="1.25" fill="rgb(102,153,204)" fill-opacity="0.45"/><rect x="568.76" y="255.48" width="1.92" height="1.25" fill="rgb(205,210,216)" fill-opacity="0.5"/><rect x="571.32" y="255.48" width="4.48" height="1.25" fill="rgb(169,201,145)" fill-opacity="0.45"/><rect x="576.44" y="255.48" width="5.12" height="1.25" fill="rgb(205,210,216)" fill-opacity="0.5"/><rect x="556.60" y="257.20" width="3.84" height="1.25" fill="rgb(205,210,216)" fill-opacity="0.5"/><rect x="561.08" y="257.20" width="5.12" height="1.25" fill="rgb(102,153,204)" fill-opacity="0.45"/><rect x="566.84" y="257.20" width="2.56" height="1.25" fill="rgb(201,123,171)" fill-opacity="0.45"/><rect x="570.04" y="257.20" width="1.28" height="1.25" fill="rgb(205,210,216)" fill-opacity="0.5"/><rect x="571.96" y="257.20" width="5.12" height="1.25" fill="rgb(205,210,216)" fill-opacity="0.5"/><rect x="577.72" y="257.20" width="3.20" height="1.25" fill="rgb(201,123,171)" fill-opacity="0.45"/><rect x="581.56" y="257.20" width="5.76" height="1.25" fill="rgb(169,201,145)" fill-opacity="0.45"/><rect x="587.96" y="257.20" width="1.28" height="1.25" fill="rgb(205,210,216)" fill-opacity="0.5"/><rect x="556.60" y="258.92" width="5.76" height="1.25" fill="rgb(169,201,145)" fill-opacity="0.45"/><rect x="563.00" y="258.92" width="5.12" height="1.25" fill="rgb(160,168,178)" fill-opacity="0.5"/><rect x="568.76" y="258.92" width="3.20" height="1.25" fill="rgb(169,201,145)" fill-opacity="0.45"/><rect x="572.60" y="258.92" width="1.28" height="1.25" fill="rgb(160,168,178)" fill-opacity="0.5"/><rect x="574.52" y="258.92" width="1.28" height="1.25" fill="rgb(160,168,178)" fill-opacity="0.5"/><rect x="576.44" y="258.92" width="5.76" height="1.25" fill="rgb(240,163,92)" fill-opacity="0.45"/><rect x="582.84" y="258.92" width="3.20" height="1.25" fill="rgb(205,210,216)" fill-opacity="0.5"/><rect x="556.60" y="260.64" width="5.76" height="1.25" fill="rgb(102,153,204)" fill-opacity="0.45"/><rect x="563.00" y="260.64" width="3.84" height="1.25" fill="rgb(102,153,204)" fill-opacity="0.45"/><rect x="567.48" y="260.64" width="3.20" height="1.25" fill="rgb(95,179,179)" fill-opacity="0.45"/><rect x="571.32" y="260.64" width="5.12" height="1.25" fill="rgb(205,210,216)" fill-opacity="0.5"/><rect x="577.08" y="260.64" width="2.56" height="1.25" fill="rgb(95,179,179)" fill-opacity="0.45"/><rect x="580.28" y="260.64" width="1.92" height="1.25" fill="rgb(205,210,216)" fill-opacity="0.5"/><rect x="582.84" y="260.64" width="2.56" height="1.25" fill="rgb(205,210,216)" fill-opacity="0.5"/><rect x="586.04" y="260.64" width="1.92" height="1.25" fill="rgb(205,210,216)" fill-opacity="0.5"/><rect x="588.60" y="260.64" width="3.84" height="1.25" fill="rgb(102,153,204)" fill-opacity="0.45"/><rect x="593.08" y="260.64" width="1.92" height="1.25" fill="rgb(205,210,216)" fill-opacity="0.5"/><rect x="556.60" y="262.36" width="4.48" height="1.25" fill="rgb(240,163,92)" fill-opacity="0.45"/><rect x="561.72" y="262.36" width="3.20" height="1.25" fill="rgb(236,110,90)" fill-opacity="0.45"/><rect x="565.56" y="262.36" width="1.28" height="1.25" fill="rgb(169,201,145)" fill-opacity="0.45"/><rect x="567.48" y="262.36" width="3.20" height="1.25" fill="rgb(95,179,179)" fill-opacity="0.45"/><rect x="571.32" y="262.36" width="3.84" height="1.25" fill="rgb(205,210,216)" fill-opacity="0.5"/><rect x="575.80" y="262.36" width="1.92" height="1.25" fill="rgb(205,210,216)" fill-opacity="0.5"/><rect x="578.36" y="262.36" width="5.76" height="1.25" fill="rgb(95,179,179)" fill-opacity="0.45"/><rect x="584.76" y="262.36" width="1.92" height="1.25" fill="rgb(205,210,216)" fill-opacity="0.5"/><rect x="556.60" y="264.08" width="1.92" height="1.25" fill="rgb(205,210,216)" fill-opacity="0.5"/><rect x="559.16" y="264.08" width="4.48" height="1.25" fill="rgb(205,210,216)" fill-opacity="0.5"/><rect x="564.28" y="264.08" width="1.92" height="1.25" fill="rgb(102,153,204)" fill-opacity="0.45"/><rect x="566.84" y="264.08" width="1.28" height="1.25" fill="rgb(201,123,171)" fill-opacity="0.45"/><rect x="568.76" y="264.08" width="3.20" height="1.25" fill="rgb(102,153,204)" fill-opacity="0.45"/><rect x="572.60" y="264.08" width="1.92" height="1.25" fill="rgb(169,201,145)" fill-opacity="0.45"/><rect x="575.16" y="264.08" width="2.56" height="1.25" fill="rgb(169,201,145)" fill-opacity="0.45"/><rect x="578.36" y="264.08" width="1.28" height="1.25" fill="rgb(240,163,92)" fill-opacity="0.45"/><rect x="580.28" y="264.08" width="5.76" height="1.25" fill="rgb(205,210,216)" fill-opacity="0.5"/><rect x="586.68" y="264.08" width="1.92" height="1.25" fill="rgb(205,210,216)" fill-opacity="0.5"/><rect x="589.24" y="264.08" width="2.56" height="1.25" fill="rgb(205,210,216)" fill-opacity="0.5"/><rect x="556.60" y="265.80" width="4.48" height="1.25" fill="rgb(102,153,204)" fill-opacity="0.45"/><rect x="561.72" y="265.80" width="3.84" height="1.25" fill="rgb(205,210,216)" fill-opacity="0.5"/><rect x="566.20" y="265.80" width="3.20" height="1.25" fill="rgb(205,210,216)" fill-opacity="0.5"/><rect x="570.04" y="265.80" width="2.56" height="1.25" fill="rgb(205,210,216)" fill-opacity="0.5"/><rect x="573.24" y="265.80" width="5.76" height="1.25" fill="rgb(205,210,216)" fill-opacity="0.5"/><rect x="579.64" y="265.80" width="2.56" height="1.25" fill="rgb(102,153,204)" fill-opacity="0.45"/><rect x="582.84" y="265.80" width="1.92" height="1.25" fill="rgb(102,153,204)" fill-opacity="0.45"/><rect x="585.40" y="265.80" width="4.48" height="1.25" fill="rgb(201,123,171)" fill-opacity="0.45"/><rect x="590.52" y="265.80" width="3.84" height="1.25" fill="rgb(205,210,216)" fill-opacity="0.5"/><rect x="595.00" y="265.80" width="1.28" height="1.25" fill="rgb(205,210,216)" fill-opacity="0.5"/><rect x="596.92" y="265.80" width="3.20" height="1.25" fill="rgb(201,123,171)" fill-opacity="0.45"/><rect x="600.76" y="265.80" width="0.64" height="1.25" fill="rgb(169,201,145)" fill-opacity="0.45"/><rect x="557.88" y="267.52" width="4.48" height="1.25" fill="rgb(169,201,145)" fill-opacity="0.45"/><rect x="563.00" y="267.52" width="3.84" height="1.25" fill="rgb(240,163,92)" fill-opacity="0.45"/><rect x="567.48" y="267.52" width="1.28" height="1.25" fill="rgb(160,168,178)" fill-opacity="0.5"/><rect x="557.88" y="270.96" width="1.92" height="1.25" fill="rgb(102,153,204)" fill-opacity="0.45"/><rect x="560.44" y="270.96" width="1.92" height="1.25" fill="rgb(102,153,204)" fill-opacity="0.45"/><rect x="563.00" y="270.96" width="1.92" height="1.25" fill="rgb(240,163,92)" fill-opacity="0.45"/><rect x="565.56" y="270.96" width="3.20" height="1.25" fill="rgb(95,179,179)" fill-opacity="0.45"/><rect x="569.40" y="270.96" width="5.12" height="1.25" fill="rgb(205,210,216)" fill-opacity="0.5"/><rect x="575.16" y="270.96" width="5.12" height="1.25" fill="rgb(205,210,216)" fill-opacity="0.5"/><rect x="580.92" y="270.96" width="5.76" height="1.25" fill="rgb(205,210,216)" fill-opacity="0.5"/><rect x="587.32" y="270.96" width="0.64" height="1.25" fill="rgb(169,201,145)" fill-opacity="0.45"/><rect x="559.16" y="272.68" width="3.84" height="1.25" fill="rgb(102,153,204)" fill-opacity="0.45"/><rect x="563.64" y="272.68" width="1.28" height="1.25" fill="rgb(205,210,216)" fill-opacity="0.5"/><rect x="565.56" y="272.68" width="1.28" height="1.25" fill="rgb(169,201,145)" fill-opacity="0.45"/><rect x="567.48" y="272.68" width="4.48" height="1.25" fill="rgb(205,210,216)" fill-opacity="0.5"/><rect x="572.60" y="272.68" width="3.84" height="1.25" fill="rgb(169,201,145)" fill-opacity="0.45"/><rect x="577.08" y="272.68" width="5.12" height="1.25" fill="rgb(102,153,204)" fill-opacity="0.45"/><rect x="582.84" y="272.68" width="3.20" height="1.25" fill="rgb(205,210,216)" fill-opacity="0.5"/><rect x="559.16" y="274.40" width="1.92" height="1.25" fill="rgb(240,163,92)" fill-opacity="0.45"/><rect x="561.72" y="274.40" width="3.20" height="1.25" fill="rgb(205,210,216)" fill-opacity="0.5"/><rect x="565.56" y="274.40" width="4.48" height="1.25" fill="rgb(205,210,216)" fill-opacity="0.5"/><rect x="570.68" y="274.40" width="4.48" height="1.25" fill="rgb(205,210,216)" fill-opacity="0.5"/><rect x="575.80" y="274.40" width="4.48" height="1.25" fill="rgb(205,210,216)" fill-opacity="0.5"/><rect x="580.92" y="274.40" width="2.56" height="1.25" fill="rgb(95,179,179)" fill-opacity="0.45"/><rect x="584.12" y="274.40" width="1.92" height="1.25" fill="rgb(201,123,171)" fill-opacity="0.45"/><rect x="586.68" y="274.40" width="2.56" height="1.25" fill="rgb(240,163,92)" fill-opacity="0.45"/><rect x="589.88" y="274.40" width="4.48" height="1.25" fill="rgb(95,179,179)" fill-opacity="0.45"/><rect x="556.60" y="277.84" width="3.20" height="1.25" fill="rgb(236,110,90)" fill-opacity="0.45"/><rect x="560.44" y="277.84" width="1.92" height="1.25" fill="rgb(205,210,216)" fill-opacity="0.5"/><rect x="563.00" y="277.84" width="1.92" height="1.25" fill="rgb(240,163,92)" fill-opacity="0.45"/><rect x="565.56" y="277.84" width="5.12" height="1.25" fill="rgb(205,210,216)" fill-opacity="0.5"/><rect x="571.32" y="277.84" width="3.20" height="1.25" fill="rgb(95,179,179)" fill-opacity="0.45"/><rect x="575.16" y="277.84" width="4.48" height="1.25" fill="rgb(205,210,216)" fill-opacity="0.5"/><rect x="580.28" y="277.84" width="5.12" height="1.25" fill="rgb(205,210,216)" fill-opacity="0.5"/><rect x="586.04" y="277.84" width="1.92" height="1.25" fill="rgb(205,210,216)" fill-opacity="0.5"/><rect x="588.60" y="277.84" width="2.56" height="1.25" fill="rgb(102,153,204)" fill-opacity="0.45"/><rect x="591.80" y="277.84" width="5.76" height="1.25" fill="rgb(205,210,216)" fill-opacity="0.5"/><rect x="598.20" y="277.84" width="2.56" height="1.25" fill="rgb(240,163,92)" fill-opacity="0.45"/><rect x="556.60" y="279.56" width="1.28" height="1.25" fill="rgb(205,210,216)" fill-opacity="0.5"/><rect x="558.52" y="279.56" width="4.48" height="1.25" fill="rgb(169,201,145)" fill-opacity="0.45"/><rect x="563.64" y="279.56" width="1.92" height="1.25" fill="rgb(205,210,216)" fill-opacity="0.5"/><rect x="566.20" y="279.56" width="3.84" height="1.25" fill="rgb(160,168,178)" fill-opacity="0.5"/><rect x="570.68" y="279.56" width="1.92" height="1.25" fill="rgb(205,210,216)" fill-opacity="0.5"/><rect x="573.24" y="279.56" width="3.20" height="1.25" fill="rgb(205,210,216)" fill-opacity="0.5"/><rect x="577.08" y="279.56" width="1.28" height="1.25" fill="rgb(160,168,178)" fill-opacity="0.5"/><rect x="559.16" y="283.00" width="5.12" height="1.25" fill="rgb(240,163,92)" fill-opacity="0.45"/><rect x="564.92" y="283.00" width="1.28" height="1.25" fill="rgb(205,210,216)" fill-opacity="0.5"/><rect x="566.84" y="283.00" width="5.76" height="1.25" fill="rgb(205,210,216)" fill-opacity="0.5"/><rect x="573.24" y="283.00" width="1.92" height="1.25" fill="rgb(240,163,92)" fill-opacity="0.45"/><rect x="575.80" y="283.00" width="2.56" height="1.25" fill="rgb(205,210,216)" fill-opacity="0.5"/><rect x="579.00" y="283.00" width="2.56" height="1.25" fill="rgb(205,210,216)" fill-opacity="0.5"/><rect x="582.20" y="283.00" width="2.56" height="1.25" fill="rgb(169,201,145)" fill-opacity="0.45"/><rect x="585.40" y="283.00" width="1.92" height="1.25" fill="rgb(169,201,145)" fill-opacity="0.45"/><rect x="587.96" y="283.00" width="1.28" height="1.25" fill="rgb(205,210,216)" fill-opacity="0.5"/><rect x="589.88" y="283.00" width="1.28" height="1.25" fill="rgb(205,210,216)" fill-opacity="0.5"/><rect x="559.16" y="284.72" width="1.28" height="1.25" fill="rgb(169,201,145)" fill-opacity="0.45"/><rect x="561.08" y="284.72" width="1.92" height="1.25" fill="rgb(95,179,179)" fill-opacity="0.45"/><rect x="563.64" y="284.72" width="3.84" height="1.25" fill="rgb(236,110,90)" fill-opacity="0.45"/><rect x="568.12" y="284.72" width="1.28" height="1.25" fill="rgb(169,201,145)" fill-opacity="0.45"/><rect x="570.04" y="284.72" width="5.12" height="1.25" fill="rgb(102,153,204)" fill-opacity="0.45"/><rect x="575.80" y="284.72" width="1.92" height="1.25" fill="rgb(205,210,216)" fill-opacity="0.5"/><rect x="578.36" y="284.72" width="3.84" height="1.25" fill="rgb(236,110,90)" fill-opacity="0.45"/><rect x="582.84" y="284.72" width="1.92" height="1.25" fill="rgb(169,201,145)" fill-opacity="0.45"/><rect x="585.40" y="284.72" width="3.84" height="1.25" fill="rgb(95,179,179)" fill-opacity="0.45"/><rect x="560.44" y="286.44" width="2.56" height="1.25" fill="rgb(160,168,178)" fill-opacity="0.5"/><rect x="563.64" y="286.44" width="1.92" height="1.25" fill="rgb(169,201,145)" fill-opacity="0.45"/><rect x="566.20" y="286.44" width="3.84" height="1.25" fill="rgb(102,153,204)" fill-opacity="0.45"/><rect x="570.68" y="286.44" width="3.84" height="1.25" fill="rgb(205,210,216)" fill-opacity="0.5"/><rect x="575.16" y="286.44" width="4.48" height="1.25" fill="rgb(205,210,216)" fill-opacity="0.5"/><rect x="580.28" y="286.44" width="5.12" height="1.25" fill="rgb(95,179,179)" fill-opacity="0.45"/><rect x="586.04" y="286.44" width="5.12" height="1.25" fill="rgb(201,123,171)" fill-opacity="0.45"/><rect x="591.80" y="286.44" width="5.12" height="1.25" fill="rgb(102,153,204)" fill-opacity="0.45"/><rect x="597.56" y="286.44" width="5.76" height="1.25" fill="rgb(205,210,216)" fill-opacity="0.5"/><rect x="603.96" y="286.44" width="0.64" height="1.25" fill="rgb(102,153,204)" fill-opacity="0.45"/><rect x="560.44" y="288.16" width="4.48" height="1.25" fill="rgb(169,201,145)" fill-opacity="0.45"/><rect x="565.56" y="288.16" width="3.20" height="1.25" fill="rgb(205,210,216)" fill-opacity="0.5"/><rect x="569.40" y="288.16" width="1.28" height="1.25" fill="rgb(205,210,216)" fill-opacity="0.5"/><rect x="561.72" y="289.88" width="5.76" height="1.25" fill="rgb(205,210,216)" fill-opacity="0.5"/><rect x="568.12" y="289.88" width="4.48" height="1.25" fill="rgb(169,201,145)" fill-opacity="0.45"/><rect x="573.24" y="289.88" width="1.92" height="1.25" fill="rgb(205,210,216)" fill-opacity="0.5"/><rect x="575.80" y="289.88" width="4.48" height="1.25" fill="rgb(205,210,216)" fill-opacity="0.5"/><rect x="580.92" y="289.88" width="4.48" height="1.25" fill="rgb(201,123,171)" fill-opacity="0.45"/><rect x="561.72" y="291.60" width="1.28" height="1.25" fill="rgb(102,153,204)" fill-opacity="0.45"/><rect x="563.64" y="291.60" width="2.56" height="1.25" fill="rgb(95,179,179)" fill-opacity="0.45"/><rect x="566.84" y="291.60" width="1.92" height="1.25" fill="rgb(160,168,178)" fill-opacity="0.5"/><rect x="569.40" y="291.60" width="4.48" height="1.25" fill="rgb(205,210,216)" fill-opacity="0.5"/><rect x="574.52" y="291.60" width="1.92" height="1.25" fill="rgb(205,210,216)" fill-opacity="0.5"/><rect x="577.08" y="291.60" width="1.28" height="1.25" fill="rgb(102,153,204)" fill-opacity="0.45"/><rect x="561.72" y="293.32" width="4.48" height="1.25" fill="rgb(169,201,145)" fill-opacity="0.45"/><rect x="566.84" y="293.32" width="1.92" height="1.25" fill="rgb(102,153,204)" fill-opacity="0.45"/><rect x="569.40" y="293.32" width="1.92" height="1.25" fill="rgb(205,210,216)" fill-opacity="0.5"/><rect x="571.96" y="293.32" width="5.12" height="1.25" fill="rgb(205,210,216)" fill-opacity="0.5"/><rect x="577.72" y="293.32" width="3.84" height="1.25" fill="rgb(102,153,204)" fill-opacity="0.45"/><rect x="582.20" y="293.32" width="1.28" height="1.25" fill="rgb(102,153,204)" fill-opacity="0.45"/><rect x="584.12" y="293.32" width="2.56" height="1.25" fill="rgb(205,210,216)" fill-opacity="0.5"/><rect x="587.32" y="293.32" width="3.84" height="1.25" fill="rgb(102,153,204)" fill-opacity="0.45"/><rect x="591.80" y="293.32" width="1.28" height="1.25" fill="rgb(95,179,179)" fill-opacity="0.45"/><rect x="593.72" y="293.32" width="1.28" height="1.25" fill="rgb(169,201,145)" fill-opacity="0.45"/><rect x="595.64" y="293.32" width="1.92" height="1.25" fill="rgb(236,110,90)" fill-opacity="0.45"/><rect x="598.20" y="293.32" width="2.56" height="1.25" fill="rgb(102,153,204)" fill-opacity="0.45"/><rect x="561.72" y="295.04" width="3.20" height="1.25" fill="rgb(236,110,90)" fill-opacity="0.45"/><rect x="565.56" y="295.04" width="1.28" height="1.25" fill="rgb(95,179,179)" fill-opacity="0.45"/><rect x="567.48" y="295.04" width="1.28" height="1.25" fill="rgb(102,153,204)" fill-opacity="0.45"/><rect x="561.72" y="296.76" width="1.92" height="1.25" fill="rgb(205,210,216)" fill-opacity="0.5"/><rect x="564.28" y="296.76" width="1.92" height="1.25" fill="rgb(240,163,92)" fill-opacity="0.45"/><rect x="566.84" y="296.76" width="2.56" height="1.25" fill="rgb(169,201,145)" fill-opacity="0.45"/><rect x="570.04" y="296.76" width="5.76" height="1.25" fill="rgb(169,201,145)" fill-opacity="0.45"/><rect x="576.44" y="296.76" width="1.92" height="1.25" fill="rgb(240,163,92)" fill-opacity="0.45"/><rect x="579.00" y="296.76" width="4.48" height="1.25" fill="rgb(205,210,216)" fill-opacity="0.5"/><rect x="584.12" y="296.76" width="1.92" height="1.25" fill="rgb(201,123,171)" fill-opacity="0.45"/><rect x="586.68" y="296.76" width="1.92" height="1.25" fill="rgb(205,210,216)" fill-opacity="0.5"/><rect x="589.24" y="296.76" width="5.12" height="1.25" fill="rgb(102,153,204)" fill-opacity="0.45"/><rect x="595.00" y="296.76" width="1.92" height="1.25" fill="rgb(205,210,216)" fill-opacity="0.5"/><rect x="597.56" y="296.76" width="1.92" height="1.25" fill="rgb(169,201,145)" fill-opacity="0.45"/><rect x="600.12" y="296.76" width="4.48" height="1.25" fill="rgb(236,110,90)" fill-opacity="0.45"/><rect x="560.44" y="298.48" width="3.84" height="1.25" fill="rgb(95,179,179)" fill-opacity="0.45"/><rect x="564.92" y="298.48" width="5.12" height="1.25" fill="rgb(205,210,216)" fill-opacity="0.5"/><rect x="570.68" y="298.48" width="5.12" height="1.25" fill="rgb(169,201,145)" fill-opacity="0.45"/><rect x="576.44" y="298.48" width="3.20" height="1.25" fill="rgb(95,179,179)" fill-opacity="0.45"/><rect x="580.28" y="298.48" width="5.76" height="1.25" fill="rgb(169,201,145)" fill-opacity="0.45"/><rect x="586.68" y="298.48" width="5.12" height="1.25" fill="rgb(160,168,178)" fill-opacity="0.5"/><rect x="592.44" y="298.48" width="5.76" height="1.25" fill="rgb(205,210,216)" fill-opacity="0.5"/><rect x="598.84" y="298.48" width="1.28" height="1.25" fill="rgb(102,153,204)" fill-opacity="0.45"/><rect x="557.88" y="301.92" width="5.12" height="1.25" fill="rgb(240,163,92)" fill-opacity="0.45"/><rect x="563.64" y="301.92" width="5.76" height="1.25" fill="rgb(201,123,171)" fill-opacity="0.45"/><rect x="570.04" y="301.92" width="2.56" height="1.25" fill="rgb(95,179,179)" fill-opacity="0.45"/><rect x="557.88" y="303.64" width="1.28" height="1.25" fill="rgb(102,153,204)" fill-opacity="0.45"/><rect x="559.16" y="305.36" width="0.64" height="1.25" fill="rgb(169,201,145)" fill-opacity="0.45"/><rect x="560.44" y="307.08" width="1.92" height="1.25" fill="rgb(236,110,90)" fill-opacity="0.45"/><rect x="563.00" y="307.08" width="2.56" height="1.25" fill="rgb(169,201,145)" fill-opacity="0.45"/><rect x="566.20" y="307.08" width="5.76" height="1.25" fill="rgb(169,201,145)" fill-opacity="0.45"/><rect x="572.60" y="307.08" width="5.12" height="1.25" fill="rgb(205,210,216)" fill-opacity="0.5"/><rect x="561.72" y="308.80" width="1.28" height="1.25" fill="rgb(205,210,216)" fill-opacity="0.5"/><rect x="557.88" y="312.24" width="5.76" height="1.25" fill="rgb(201,123,171)" fill-opacity="0.45"/><rect x="564.28" y="312.24" width="3.84" height="1.25" fill="rgb(205,210,216)" fill-opacity="0.5"/><rect x="568.76" y="312.24" width="3.20" height="1.25" fill="rgb(205,210,216)" fill-opacity="0.5"/><rect x="572.60" y="312.24" width="3.20" height="1.25" fill="rgb(205,210,216)" fill-opacity="0.5"/><rect x="576.44" y="312.24" width="4.48" height="1.25" fill="rgb(205,210,216)" fill-opacity="0.5"/><rect x="581.56" y="312.24" width="1.28" height="1.25" fill="rgb(205,210,216)" fill-opacity="0.5"/><rect x="557.88" y="313.96" width="4.48" height="1.25" fill="rgb(201,123,171)" fill-opacity="0.45"/><rect x="563.00" y="313.96" width="1.92" height="1.25" fill="rgb(102,153,204)" fill-opacity="0.45"/><rect x="565.56" y="313.96" width="3.84" height="1.25" fill="rgb(205,210,216)" fill-opacity="0.5"/><rect x="570.04" y="313.96" width="3.20" height="1.25" fill="rgb(201,123,171)" fill-opacity="0.45"/><rect x="573.88" y="313.96" width="1.28" height="1.25" fill="rgb(205,210,216)" fill-opacity="0.5"/><rect x="575.80" y="313.96" width="3.84" height="1.25" fill="rgb(102,153,204)" fill-opacity="0.45"/><rect x="580.28" y="313.96" width="3.84" height="1.25" fill="rgb(102,153,204)" fill-opacity="0.45"/><rect x="584.76" y="313.96" width="2.56" height="1.25" fill="rgb(102,153,204)" fill-opacity="0.45"/><rect x="587.96" y="313.96" width="5.76" height="1.25" fill="rgb(205,210,216)" fill-opacity="0.5"/><rect x="594.36" y="313.96" width="0.64" height="1.25" fill="rgb(205,210,216)" fill-opacity="0.5"/><rect x="559.16" y="315.68" width="5.12" height="1.25" fill="rgb(205,210,216)" fill-opacity="0.5"/><rect x="564.92" y="315.68" width="2.56" height="1.25" fill="rgb(205,210,216)" fill-opacity="0.5"/><rect x="568.12" y="315.68" width="2.56" height="1.25" fill="rgb(236,110,90)" fill-opacity="0.45"/><rect x="571.32" y="315.68" width="3.84" height="1.25" fill="rgb(102,153,204)" fill-opacity="0.45"/><rect x="575.80" y="315.68" width="1.28" height="1.25" fill="rgb(169,201,145)" fill-opacity="0.45"/><rect x="577.72" y="315.68" width="0.64" height="1.25" fill="rgb(236,110,90)" fill-opacity="0.45"/><rect x="560.44" y="317.40" width="3.20" height="1.25" fill="rgb(160,168,178)" fill-opacity="0.5"/><rect x="564.28" y="317.40" width="3.84" height="1.25" fill="rgb(201,123,171)" fill-opacity="0.45"/><rect x="568.76" y="317.40" width="3.20" height="1.25" fill="rgb(205,210,216)" fill-opacity="0.5"/><rect x="572.60" y="317.40" width="1.92" height="1.25" fill="rgb(205,210,216)" fill-opacity="0.5"/><rect x="575.16" y="317.40" width="3.84" height="1.25" fill="rgb(205,210,216)" fill-opacity="0.5"/><rect x="579.64" y="317.40" width="1.92" height="1.25" fill="rgb(205,210,216)" fill-opacity="0.5"/><rect x="582.20" y="317.40" width="1.92" height="1.25" fill="rgb(201,123,171)" fill-opacity="0.45"/><rect x="561.72" y="319.12" width="1.92" height="1.25" fill="rgb(205,210,216)" fill-opacity="0.5"/><rect x="560.44" y="320.84" width="1.92" height="1.25" fill="rgb(169,201,145)" fill-opacity="0.45"/><rect x="563.00" y="320.84" width="2.56" height="1.25" fill="rgb(205,210,216)" fill-opacity="0.5"/><rect x="566.20" y="320.84" width="4.48" height="1.25" fill="rgb(95,179,179)" fill-opacity="0.45"/><rect x="571.32" y="320.84" width="3.20" height="1.25" fill="rgb(205,210,216)" fill-opacity="0.5"/><rect x="575.16" y="320.84" width="5.12" height="1.25" fill="rgb(205,210,216)" fill-opacity="0.5"/><rect x="580.92" y="320.84" width="5.76" height="1.25" fill="rgb(205,210,216)" fill-opacity="0.5"/><rect x="559.16" y="322.56" width="1.92" height="1.25" fill="rgb(205,210,216)" fill-opacity="0.5"/><rect x="561.72" y="322.56" width="3.84" height="1.25" fill="rgb(102,153,204)" fill-opacity="0.45"/><rect x="566.20" y="322.56" width="4.48" height="1.25" fill="rgb(205,210,216)" fill-opacity="0.5"/><rect x="571.32" y="322.56" width="3.84" height="1.25" fill="rgb(205,210,216)" fill-opacity="0.5"/><rect x="575.80" y="322.56" width="2.56" height="1.25" fill="rgb(169,201,145)" fill-opacity="0.45"/><rect x="579.00" y="322.56" width="1.28" height="1.25" fill="rgb(95,179,179)" fill-opacity="0.45"/><rect x="580.92" y="322.56" width="3.20" height="1.25" fill="rgb(205,210,216)" fill-opacity="0.5"/><rect x="560.44" y="326.00" width="0.64" height="1.25" fill="rgb(102,153,204)" fill-opacity="0.45"/><rect x="560.44" y="327.72" width="0.64" height="1.25" fill="rgb(205,210,216)" fill-opacity="0.5"/><rect x="561.72" y="329.44" width="5.12" height="1.25" fill="rgb(205,210,216)" fill-opacity="0.5"/><rect x="567.48" y="329.44" width="5.12" height="1.25" fill="rgb(201,123,171)" fill-opacity="0.45"/><rect x="573.24" y="329.44" width="4.48" height="1.25" fill="rgb(205,210,216)" fill-opacity="0.5"/><rect x="578.36" y="329.44" width="4.48" height="1.25" fill="rgb(169,201,145)" fill-opacity="0.45"/><rect x="583.48" y="329.44" width="1.28" height="1.25" fill="rgb(205,210,216)" fill-opacity="0.5"/><rect x="585.40" y="329.44" width="3.84" height="1.25" fill="rgb(205,210,216)" fill-opacity="0.5"/><rect x="589.88" y="329.44" width="4.48" height="1.25" fill="rgb(160,168,178)" fill-opacity="0.5"/><rect x="595.00" y="329.44" width="4.48" height="1.25" fill="rgb(160,168,178)" fill-opacity="0.5"/><rect x="600.12" y="329.44" width="2.56" height="1.25" fill="rgb(240,163,92)" fill-opacity="0.45"/><rect x="556.60" y="332.88" width="5.76" height="1.25" fill="rgb(205,210,216)" fill-opacity="0.5"/><rect x="563.00" y="332.88" width="4.48" height="1.25" fill="rgb(205,210,216)" fill-opacity="0.5"/><rect x="568.12" y="332.88" width="3.20" height="1.25" fill="rgb(102,153,204)" fill-opacity="0.45"/><rect x="556.60" y="334.60" width="1.28" height="1.25" fill="rgb(205,210,216)" fill-opacity="0.5"/><rect x="558.52" y="334.60" width="3.84" height="1.25" fill="rgb(205,210,216)" fill-opacity="0.5"/><rect x="563.00" y="334.60" width="1.92" height="1.25" fill="rgb(102,153,204)" fill-opacity="0.45"/><rect x="565.56" y="334.60" width="4.48" height="1.25" fill="rgb(205,210,216)" fill-opacity="0.5"/><rect x="570.68" y="334.60" width="1.28" height="1.25" fill="rgb(205,210,216)" fill-opacity="0.5"/><rect x="572.60" y="334.60" width="1.92" height="1.25" fill="rgb(205,210,216)" fill-opacity="0.5"/><rect x="575.16" y="334.60" width="3.20" height="1.25" fill="rgb(240,163,92)" fill-opacity="0.45"/><rect x="579.00" y="334.60" width="3.20" height="1.25" fill="rgb(205,210,216)" fill-opacity="0.5"/><rect x="582.84" y="334.60" width="0.64" height="1.25" fill="rgb(236,110,90)" fill-opacity="0.45"/><rect x="556.60" y="336.32" width="1.92" height="1.25" fill="rgb(169,201,145)" fill-opacity="0.45"/><rect x="559.16" y="336.32" width="2.56" height="1.25" fill="rgb(169,201,145)" fill-opacity="0.45"/><rect x="562.36" y="336.32" width="3.20" height="1.25" fill="rgb(102,153,204)" fill-opacity="0.45"/><rect x="566.20" y="336.32" width="3.20" height="1.25" fill="rgb(169,201,145)" fill-opacity="0.45"/><rect x="570.04" y="336.32" width="3.84" height="1.25" fill="rgb(236,110,90)" fill-opacity="0.45"/><rect x="574.52" y="336.32" width="1.92" height="1.25" fill="rgb(95,179,179)" fill-opacity="0.45"/><rect x="577.08" y="336.32" width="1.28" height="1.25" fill="rgb(205,210,216)" fill-opacity="0.5"/><rect x="556.60" y="338.04" width="0.64" height="1.25" fill="rgb(205,210,216)" fill-opacity="0.5"/><rect x="557.88" y="339.76" width="4.48" height="1.25" fill="rgb(102,153,204)" fill-opacity="0.45"/><rect x="563.00" y="339.76" width="2.56" height="1.25" fill="rgb(205,210,216)" fill-opacity="0.5"/><rect x="566.20" y="339.76" width="2.56" height="1.25" fill="rgb(102,153,204)" fill-opacity="0.45"/><rect x="569.40" y="339.76" width="1.28" height="1.25" fill="rgb(205,210,216)" fill-opacity="0.5"/><rect x="571.32" y="339.76" width="3.20" height="1.25" fill="rgb(205,210,216)" fill-opacity="0.5"/><rect x="575.16" y="339.76" width="3.20" height="1.25" fill="rgb(240,163,92)" fill-opacity="0.45"/><rect x="579.00" y="339.76" width="4.48" height="1.25" fill="rgb(201,123,171)" fill-opacity="0.45"/><rect x="584.12" y="339.76" width="1.92" height="1.25" fill="rgb(102,153,204)" fill-opacity="0.45"/><rect x="586.68" y="339.76" width="2.56" height="1.25" fill="rgb(205,210,216)" fill-opacity="0.5"/><rect x="589.88" y="339.76" width="2.56" height="1.25" fill="rgb(201,123,171)" fill-opacity="0.45"/><rect x="593.08" y="339.76" width="0.64" height="1.25" fill="rgb(205,210,216)" fill-opacity="0.5"/><rect x="556.60" y="343.20" width="5.76" height="1.25" fill="rgb(160,168,178)" fill-opacity="0.5"/><rect x="563.00" y="343.20" width="3.84" height="1.25" fill="rgb(205,210,216)" fill-opacity="0.5"/><rect x="567.48" y="343.20" width="1.92" height="1.25" fill="rgb(205,210,216)" fill-opacity="0.5"/><rect x="556.60" y="344.92" width="2.56" height="1.25" fill="rgb(205,210,216)" fill-opacity="0.5"/><rect x="559.80" y="344.92" width="4.48" height="1.25" fill="rgb(205,210,216)" fill-opacity="0.5"/><rect x="564.92" y="344.92" width="3.84" height="1.25" fill="rgb(95,179,179)" fill-opacity="0.45"/><rect x="569.40" y="344.92" width="5.76" height="1.25" fill="rgb(201,123,171)" fill-opacity="0.45"/><rect x="575.80" y="344.92" width="5.76" height="1.25" fill="rgb(240,163,92)" fill-opacity="0.45"/><rect x="582.20" y="344.92" width="1.28" height="1.25" fill="rgb(205,210,216)" fill-opacity="0.5"/><rect x="584.12" y="344.92" width="2.56" height="1.25" fill="rgb(95,179,179)" fill-opacity="0.45"/><rect x="587.32" y="344.92" width="1.28" height="1.25" fill="rgb(240,163,92)" fill-opacity="0.45"/><rect x="589.24" y="344.92" width="5.12" height="1.25" fill="rgb(236,110,90)" fill-opacity="0.45"/><rect x="556.60" y="346.64" width="3.20" height="1.25" fill="rgb(205,210,216)" fill-opacity="0.5"/><rect x="560.44" y="346.64" width="1.28" height="1.25" fill="rgb(205,210,216)" fill-opacity="0.5"/><rect x="562.36" y="346.64" width="5.12" height="1.25" fill="rgb(95,179,179)" fill-opacity="0.45"/><rect x="568.12" y="346.64" width="1.92" height="1.25" fill="rgb(240,163,92)" fill-opacity="0.45"/><rect x="570.68" y="346.64" width="1.28" height="1.25" fill="rgb(205,210,216)" fill-opacity="0.5"/><rect x="557.88" y="348.36" width="4.48" height="1.25" fill="rgb(102,153,204)" fill-opacity="0.45"/><rect x="563.00" y="348.36" width="4.48" height="1.25" fill="rgb(95,179,179)" fill-opacity="0.45"/><rect x="568.12" y="348.36" width="3.84" height="1.25" fill="rgb(102,153,204)" fill-opacity="0.45"/><rect x="572.60" y="348.36" width="0.64" height="1.25" fill="rgb(201,123,171)" fill-opacity="0.45"/><rect x="556.60" y="350.08" width="5.12" height="1.25" fill="rgb(236,110,90)" fill-opacity="0.45"/><rect x="562.36" y="350.08" width="5.76" height="1.25" fill="rgb(102,153,204)" fill-opacity="0.45"/><rect x="568.76" y="350.08" width="4.48" height="1.25" fill="rgb(95,179,179)" fill-opacity="0.45"/><rect x="573.88" y="350.08" width="3.20" height="1.25" fill="rgb(205,210,216)" fill-opacity="0.5"/><rect x="577.72" y="350.08" width="5.76" height="1.25" fill="rgb(160,168,178)" fill-opacity="0.5"/><rect x="556.60" y="351.80" width="4.48" height="1.25" fill="rgb(205,210,216)" fill-opacity="0.5"/><rect x="561.72" y="351.80" width="5.12" height="1.25" fill="rgb(205,210,216)" fill-opacity="0.5"/><rect x="567.48" y="351.80" width="4.48" height="1.25" fill="rgb(102,153,204)" fill-opacity="0.45"/><rect x="572.60" y="351.80" width="1.92" height="1.25" fill="rgb(205,210,216)" fill-opacity="0.5"/><rect x="575.16" y="351.80" width="4.48" height="1.25" fill="rgb(95,179,179)" fill-opacity="0.45"/><rect x="580.28" y="351.80" width="1.92" height="1.25" fill="rgb(95,179,179)" fill-opacity="0.45"/><rect x="582.84" y="351.80" width="5.12" height="1.25" fill="rgb(205,210,216)" fill-opacity="0.5"/><rect x="588.60" y="351.80" width="5.76" height="1.25" fill="rgb(169,201,145)" fill-opacity="0.45"/><rect x="557.88" y="355.24" width="1.92" height="1.25" fill="rgb(102,153,204)" fill-opacity="0.45"/><rect x="560.44" y="355.24" width="5.76" height="1.25" fill="rgb(95,179,179)" fill-opacity="0.45"/><rect x="566.84" y="355.24" width="1.28" height="1.25" fill="rgb(205,210,216)" fill-opacity="0.5"/><rect x="568.76" y="355.24" width="1.28" height="1.25" fill="rgb(102,153,204)" fill-opacity="0.45"/><rect x="570.68" y="355.24" width="5.76" height="1.25" fill="rgb(205,210,216)" fill-opacity="0.5"/><rect x="577.08" y="355.24" width="1.92" height="1.25" fill="rgb(102,153,204)" fill-opacity="0.45"/><rect x="579.64" y="355.24" width="1.28" height="1.25" fill="rgb(205,210,216)" fill-opacity="0.5"/><rect x="581.56" y="355.24" width="4.48" height="1.25" fill="rgb(205,210,216)" fill-opacity="0.5"/><rect x="559.16" y="356.96" width="5.12" height="1.25" fill="rgb(201,123,171)" fill-opacity="0.45"/><rect x="564.92" y="356.96" width="1.28" height="1.25" fill="rgb(205,210,216)" fill-opacity="0.5"/><rect x="566.84" y="356.96" width="5.76" height="1.25" fill="rgb(95,179,179)" fill-opacity="0.45"/><rect x="573.24" y="356.96" width="2.56" height="1.25" fill="rgb(102,153,204)" fill-opacity="0.45"/><rect x="576.44" y="356.96" width="4.48" height="1.25" fill="rgb(160,168,178)" fill-opacity="0.5"/><rect x="581.56" y="356.96" width="4.48" height="1.25" fill="rgb(205,210,216)" fill-opacity="0.5"/><rect x="586.68" y="356.96" width="3.20" height="1.25" fill="rgb(240,163,92)" fill-opacity="0.45"/><rect x="590.52" y="356.96" width="3.84" height="1.25" fill="rgb(205,210,216)" fill-opacity="0.5"/><rect x="595.00" y="356.96" width="1.28" height="1.25" fill="rgb(102,153,204)" fill-opacity="0.45"/></g></svg></div>
<div id="scroll"></div>
<div id="thumb"></div>
<svg style="position:absolute;left:502.5px;top:322.3px" width="48" height="16" viewBox="0 0 48 16"><path fill="#c8423f" fill-rule="evenodd" d="M8 0 H39.5 A8 8 0 0 1 39.5 16 H8 A8 8 0 0 1 8 0Z M10.5 2.7 A5.3 5.3 0 1 0 10.5 13.3 A5.3 5.3 0 1 0 10.5 2.7Z M23.8 2.7 A5.3 5.3 0 1 0 23.8 13.3 A5.3 5.3 0 1 0 23.8 2.7Z M37.1 2.7 A5.3 5.3 0 1 0 37.1 13.3 A5.3 5.3 0 1 0 37.1 2.7Z"/></svg>
</div></div>
<div id="status">
<div style="position:absolute;left:7.8px;top:3.4px;width:10px;height:7.6px;border:0.8px solid #8f949a;border-top:1.1px solid #50545a;border-bottom:2.7px solid #5a5f65;"></div>
<div class="tx" style="left:26.75px">Line 212, Column 8</div>
<div class="tx" style="left:604px;color:#575b61">75%</div>
<div class="tx" style="left:678px;color:#575b61;transform:scaleX(0.85)">Spaces: 2</div>
<div class="tx" style="left:752.75px;color:#575b61">C++</div>
</div>
<div id="frameR"></div>
<div id="frameB"></div>
</body></html>
